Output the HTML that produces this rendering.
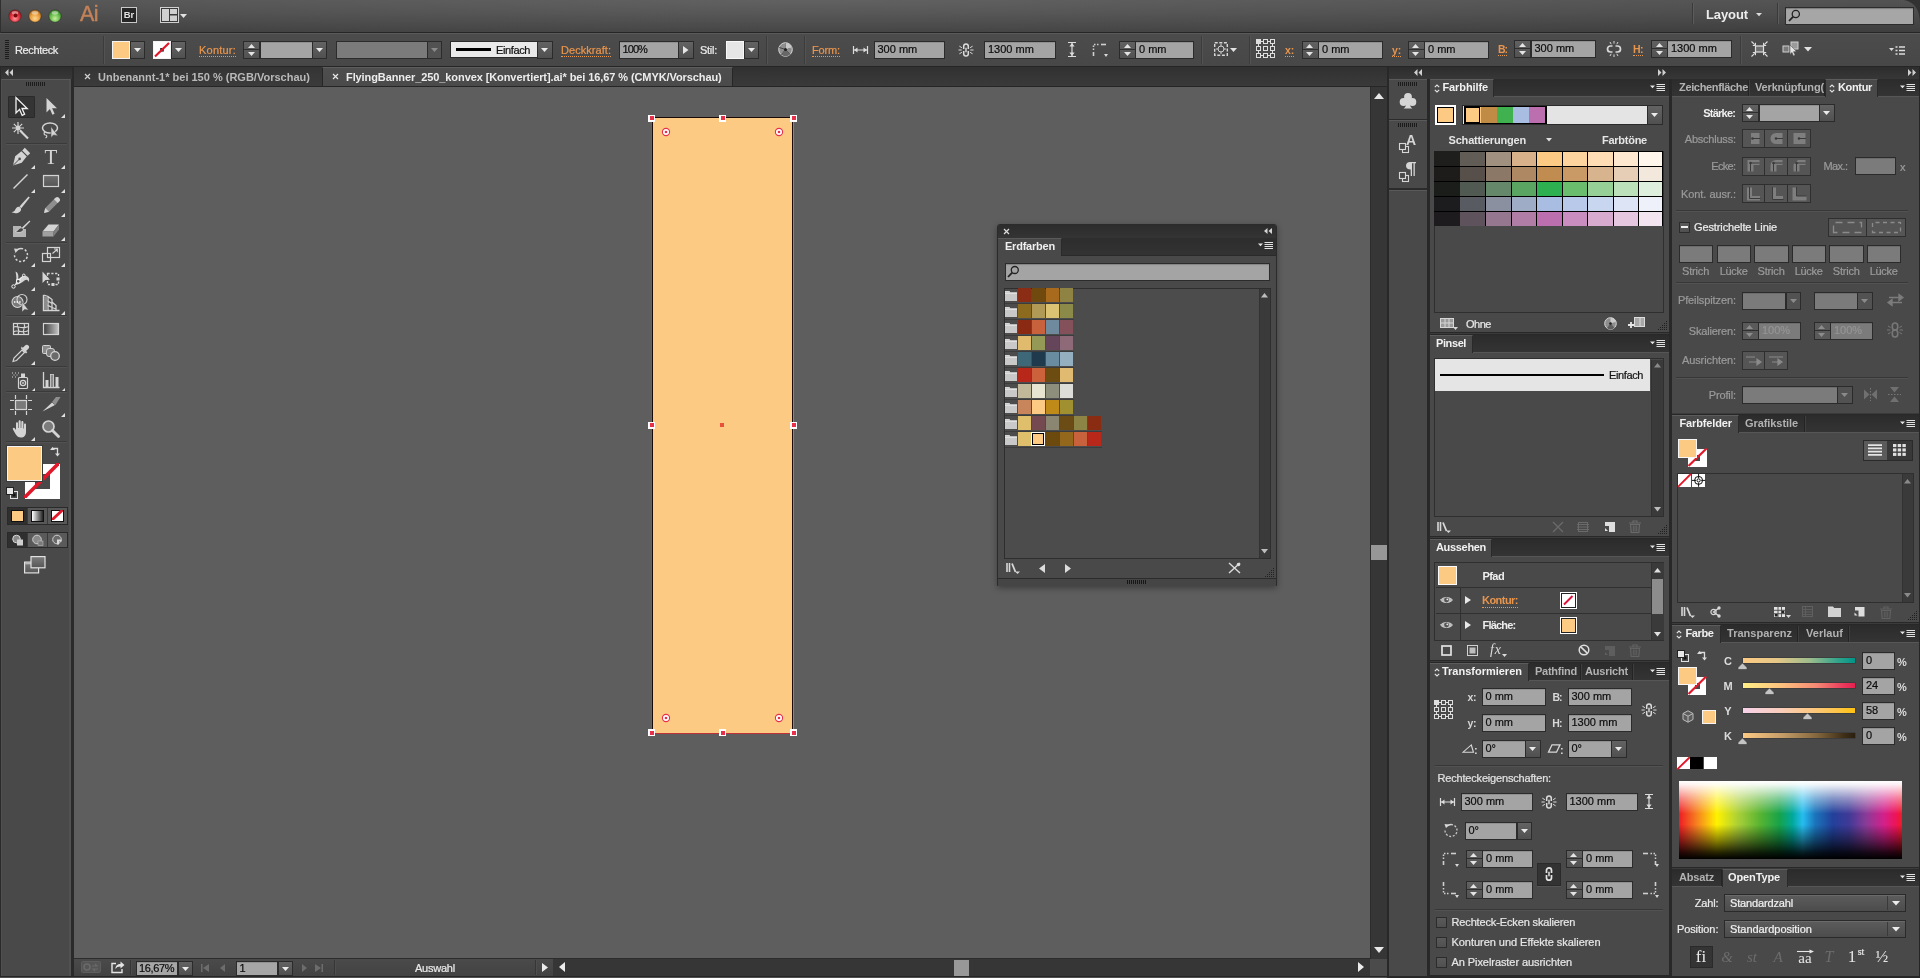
<!DOCTYPE html>
<html><head><meta charset="utf-8"><title>Illustrator</title>
<style>
html,body{margin:0;padding:0;}
body{width:1920px;height:978px;overflow:hidden;background:#5e5e5e;font-family:"Liberation Sans",sans-serif;font-size:11px;position:relative;}
#L{position:absolute;left:0;top:0;width:1920px;height:978px;will-change:transform;}
#L>div,#L>span,#L>svg{position:absolute;box-sizing:border-box;}
#L>svg{overflow:visible;}

</style></head><body><div id="L">
<div style="left:0px;top:0px;width:1920px;height:33px;background:radial-gradient(ellipse 60% 160% at 42% 0%,rgba(255,255,255,.09),rgba(255,255,255,0) 100%),linear-gradient(#525252 0%,#4a4a4a 45%,#3e3e3e 100%);"></div>
<svg style="left:1900px;top:0px;" width="20" height="24" viewBox="0 0 20 24"><path d="M20 0v24C20 10 15 2 4 0z" fill="#2a2a2a" opacity=".8"/></svg>
<div style="left:0px;top:32px;width:1920px;height:1px;background:#262626;"></div>
<div style="left:0px;top:0px;width:1px;height:67px;background:#303030;"></div>
<div style="left:0px;top:33px;width:1920px;height:33px;background:linear-gradient(#4c4c4c,#474747);"></div>
<div style="left:0px;top:33px;width:1920px;height:1px;background:#5a5a5a;"></div>
<div style="left:0px;top:66px;width:1920px;height:1px;background:#262626;"></div>
<div style="left:73px;top:67px;width:1315px;height:20px;background:linear-gradient(#313131,#3a3a3a);"></div>
<div style="left:73px;top:86px;width:1315px;height:1px;background:#2a2a2a;"></div>
<div style="left:74px;top:87px;width:1296px;height:872px;background:#5e5e5e;"></div>
<svg style="left:8px;top:8.6px;" width="14" height="15" viewBox="0 0 14 15"><defs><radialGradient id="g15" cx="50%" cy="70%" r="60%"><stop offset="0" stop-color="#ff9aa0"/><stop offset=".6" stop-color="#e0323c"/><stop offset="1" stop-color="#a81a22"/></radialGradient></defs><circle cx="7" cy="7" r="6.2" fill="url(#g15)" stroke="rgba(40,30,30,.55)" stroke-width=".8"/><ellipse cx="7" cy="3.8" rx="3.3" ry="1.9" fill="rgba(255,255,255,.45)"/></svg>
<svg style="left:12.5px;top:12.6px;" width="5" height="5" viewBox="0 0 5 5"><circle cx="2.5" cy="2.5" r="2" fill="#7a0a10"/></svg>
<svg style="left:27.5px;top:8.6px;" width="14" height="15" viewBox="0 0 14 15"><defs><radialGradient id="g34" cx="50%" cy="70%" r="60%"><stop offset="0" stop-color="#ffd890"/><stop offset=".6" stop-color="#eaa040"/><stop offset="1" stop-color="#b87420"/></radialGradient></defs><circle cx="7" cy="7" r="6.2" fill="url(#g34)" stroke="rgba(40,30,30,.55)" stroke-width=".8"/><ellipse cx="7" cy="3.8" rx="3.3" ry="1.9" fill="rgba(255,255,255,.45)"/></svg>
<svg style="left:47.5px;top:8.6px;" width="14" height="15" viewBox="0 0 14 15"><defs><radialGradient id="g54" cx="50%" cy="70%" r="60%"><stop offset="0" stop-color="#c8f0a0"/><stop offset=".6" stop-color="#6cbf4e"/><stop offset="1" stop-color="#3f8a2c"/></radialGradient></defs><circle cx="7" cy="7" r="6.2" fill="url(#g54)" stroke="rgba(40,30,30,.55)" stroke-width=".8"/><ellipse cx="7" cy="3.8" rx="3.3" ry="1.9" fill="rgba(255,255,255,.45)"/></svg>
<span style="font-size:21.5px;line-height:24px;color:#c38258;white-space:nowrap;letter-spacing:-0.56px;left:80px;top:2px;-webkit-text-stroke:.45px #c38258;">Ai</span>
<div style="left:121px;top:7px;width:16px;height:16px;background:#262626;border:1px solid #c9c9c9;"></div>
<span style="font-size:9.5px;line-height:10px;color:#e0e0e0;white-space:nowrap;font-weight:700;left:123.72px;top:10.2px;">Br</span>
<svg style="left:160px;top:7px;" width="19" height="16" viewBox="0 0 19 16"><rect x=".5" y=".5" width="18" height="15" fill="#3a3a3a" stroke="#d0d0d0"/><rect x="2" y="2" width="7" height="12" fill="#cfcfcf"/><rect x="10" y="2" width="7" height="5" fill="#cfcfcf"/><rect x="10" y="8.5" width="7" height="5.5" fill="#cfcfcf"/></svg>
<svg style="left:180px;top:14px;" width="7" height="4" viewBox="0 0 7 4"><path d="M0 0H7 L3.5 4 Z" fill="#e2e2e2"/></svg>
<div style="left:1692px;top:3px;width:1px;height:21px;background:#3a3a3a;"></div>
<div style="left:1693px;top:3px;width:1px;height:21px;background:#5c5c5c;"></div>
<span style="font-size:13px;line-height:16px;color:#ececec;white-space:nowrap;font-weight:700;letter-spacing:-0.1px;left:1706px;top:6.6px;">Layout</span>
<svg style="left:1756px;top:13px;" width="6" height="3.2" viewBox="0 0 6 3.2"><path d="M0 0H6 L3 3.2 Z" fill="#dcdcdc"/></svg>
<div style="left:1777px;top:3px;width:1px;height:21px;background:#3a3a3a;"></div>
<div style="left:1778px;top:3px;width:1px;height:21px;background:#5c5c5c;"></div>
<div style="left:1785px;top:7px;width:129px;height:18px;background:#a6a6a6;border:1px solid #2c2c2c;box-shadow:inset 0 1px 1px rgba(0,0,0,.25);"></div>
<svg style="left:1788px;top:9px;" width="13" height="13" viewBox="0 0 13 13"><circle cx="7.8" cy="5" r="3.6" fill="none" stroke="#222" stroke-width="1.3"/><path d="M5.2 7.6L1 12" stroke="#222" stroke-width="1.8"/></svg>
<svg style="left:5px;top:40px;" width="4" height="20" viewBox="0 0 4 20"><rect x="0" y="0" width="4" height="1" fill="#1c1c1c"/><rect x="0" y="2" width="4" height="1" fill="#1c1c1c"/><rect x="0" y="4" width="4" height="1" fill="#1c1c1c"/><rect x="0" y="6" width="4" height="1" fill="#1c1c1c"/><rect x="0" y="8" width="4" height="1" fill="#1c1c1c"/><rect x="0" y="10" width="4" height="1" fill="#1c1c1c"/><rect x="0" y="12" width="4" height="1" fill="#1c1c1c"/><rect x="0" y="14" width="4" height="1" fill="#1c1c1c"/><rect x="0" y="16" width="4" height="1" fill="#1c1c1c"/><rect x="0" y="18" width="4" height="1" fill="#1c1c1c"/></svg>
<span style="font-size:11px;line-height:14px;color:#eaeaea;white-space:nowrap;-webkit-text-stroke:.22px #eaeaea;letter-spacing:-0.36px;left:15px;top:43px;">Rechteck</span>
<div style="left:103px;top:36px;width:1px;height:28px;background:#3c3c3c;"></div>
<div style="left:104px;top:36px;width:1px;height:28px;background:#535353;"></div>
<div style="left:112px;top:41px;width:18px;height:17.5px;background:#fcca83;border:1px solid #f4f4f4;outline:0;"></div>
<div style="left:130px;top:40.5px;width:15px;height:18px;background:linear-gradient(#636363,#505050);border:1px solid #2b2b2b;"></div>
<svg style="left:134px;top:48px;" width="7" height="4" viewBox="0 0 7 4"><path d="M0 0H7 L3.5 4 Z" fill="#ececec"/></svg>
<div style="left:153px;top:41px;width:18px;height:17.5px;background:#fff;border:1px solid #f4f4f4;"></div>
<svg style="left:153px;top:41px;" width="18" height="17.5" viewBox="0 0 18 17.5"><rect x="7.2" y="7" width="3.6" height="3.6" fill="#222"/><path d="M2 15.5L16 2" stroke="#e0182a" stroke-width="2.2"/></svg>
<div style="left:171px;top:40.5px;width:15px;height:18px;background:linear-gradient(#636363,#505050);border:1px solid #2b2b2b;"></div>
<svg style="left:175px;top:48px;" width="7" height="4" viewBox="0 0 7 4"><path d="M0 0H7 L3.5 4 Z" fill="#ececec"/></svg>
<span style="font-size:11px;line-height:14px;color:#e8954e;white-space:nowrap;-webkit-text-stroke:.22px #e8954e;letter-spacing:0.22px;left:199px;top:43px;">Kontur:</span>
<div style="left:199px;top:56.4px;width:37px;height:1px;border-top:1px dotted #e8954e;"></div>
<div style="left:242.5px;top:40.5px;width:17.5px;height:18px;background:linear-gradient(#616161,#525252);border:1px solid #2b2b2b;"></div>
<div style="left:243.5px;top:49px;width:15.5px;height:1px;background:#2f2f2f;"></div>
<svg style="left:248px;top:44px;" width="7" height="4" viewBox="0 0 7 4"><path d="M0 4 H7 L3.5 0 Z" fill="#e4e4e4"/></svg>
<svg style="left:248px;top:52px;" width="7" height="4" viewBox="0 0 7 4"><path d="M0 0H7 L3.5 4 Z" fill="#e4e4e4"/></svg>
<div style="left:259.5px;top:40.5px;width:53px;height:18px;background:#a4a4a4;border:1px solid #2b2b2b;box-shadow:inset 0 1px 0 rgba(0,0,0,.12);"></div>
<div style="left:312px;top:40.5px;width:15px;height:18px;background:linear-gradient(#636363,#505050);border:1px solid #2b2b2b;"></div>
<svg style="left:316px;top:48px;" width="7" height="4" viewBox="0 0 7 4"><path d="M0 0H7 L3.5 4 Z" fill="#ececec"/></svg>
<div style="left:336px;top:40.5px;width:92px;height:18px;background:#7b7b7b;border:1px solid #2b2b2b;"></div>
<div style="left:427px;top:40.5px;width:14.5px;height:18px;background:#525252;border:1px solid #2b2b2b;"></div>
<svg style="left:431px;top:48px;" width="7" height="4" viewBox="0 0 7 4"><path d="M0 0H7 L3.5 4 Z" fill="#8a8a8a"/></svg>
<div style="left:450px;top:41px;width:88px;height:17px;background:#e9e9e9;border:1px solid #2b2b2b;"></div>
<div style="left:456px;top:48px;width:35px;height:3px;background:#000;"></div>
<span style="font-size:11px;line-height:14px;color:#111;white-space:nowrap;-webkit-text-stroke:.22px #111;letter-spacing:-0.38px;left:496px;top:43px;">Einfach</span>
<div style="left:537px;top:40.5px;width:15.5px;height:18px;background:linear-gradient(#636363,#505050);border:1px solid #2b2b2b;"></div>
<svg style="left:541px;top:48px;" width="7" height="4" viewBox="0 0 7 4"><path d="M0 0H7 L3.5 4 Z" fill="#ececec"/></svg>
<span style="font-size:11px;line-height:14px;color:#e8954e;white-space:nowrap;-webkit-text-stroke:.22px #e8954e;letter-spacing:0.05px;left:561px;top:43px;">Deckkraft:</span>
<div style="left:561px;top:56.4px;width:50px;height:1px;border-top:1px dotted #e8954e;"></div>
<div style="left:618.5px;top:40.5px;width:60px;height:18px;background:#a4a4a4;border:1px solid #2b2b2b;box-shadow:inset 0 1px 0 rgba(0,0,0,.12);"></div>
<span style="font-size:11px;line-height:14px;color:#0c0c0c;white-space:nowrap;letter-spacing:-0.91px;left:622.5px;top:42.2px;-webkit-text-stroke:.2px #0c0c0c;">100%</span>
<div style="left:678px;top:40.5px;width:15.5px;height:18px;background:linear-gradient(#636363,#505050);border:1px solid #2b2b2b;"></div>
<svg style="left:683px;top:46px;" width="5.5" height="8" viewBox="0 0 5.5 8"><path d="M0 0V8 L5.5 4 Z" fill="#e6e6e6"/></svg>
<span style="font-size:11px;line-height:14px;color:#eaeaea;white-space:nowrap;-webkit-text-stroke:.22px #eaeaea;letter-spacing:-0.27px;left:700px;top:43px;">Stil:</span>
<div style="left:725.5px;top:41px;width:18px;height:17.5px;background:#e6e6e6;border:1px solid #f8f8f8;"></div>
<div style="left:743.5px;top:40.5px;width:15px;height:18px;background:linear-gradient(#636363,#505050);border:1px solid #2b2b2b;"></div>
<svg style="left:748px;top:48px;" width="7" height="4" viewBox="0 0 7 4"><path d="M0 0H7 L3.5 4 Z" fill="#ececec"/></svg>
<div style="left:766px;top:36px;width:1px;height:28px;background:#3c3c3c;"></div>
<div style="left:767px;top:36px;width:1px;height:28px;background:#535353;"></div>
<svg style="left:778px;top:42px;" width="15" height="15" viewBox="0 0 15 15"><circle cx="7.5" cy="7.5" r="6.8" fill="#8e8e8e" stroke="#d8d8d8" stroke-width="1"/><path d="M7.5 7.5L7.5 1M7.5 7.5L13.5 5M7.5 7.5L12 12.5M7.5 7.5L3.5 12.8M7.5 7.5L1.3 5.5" stroke="#444" stroke-width="1"/><path d="M7.5 7.5L7.5 .9A6.6 6.6 0 0 1 13.8 5.4Z" fill="#c8c8c8"/><path d="M7.5 7.5L12 12.4A6.6 6.6 0 0 1 3.4 12.7Z" fill="#686868"/><circle cx="7.5" cy="7.5" r="1.5" fill="#222"/></svg>
<div style="left:804px;top:36px;width:1px;height:28px;background:#3c3c3c;"></div>
<div style="left:805px;top:36px;width:1px;height:28px;background:#535353;"></div>
<span style="font-size:11px;line-height:14px;color:#e8954e;white-space:nowrap;-webkit-text-stroke:.22px #e8954e;letter-spacing:-0.14px;left:812px;top:43px;">Form:</span>
<div style="left:812px;top:56.4px;width:28px;height:1px;border-top:1px dotted #e8954e;"></div>
<svg style="left:853px;top:46px;" width="15" height="8" viewBox="0 0 15 8"><path d="M.5 0v8M14.500 0v8M1 4h13" stroke="#dcdcdc" stroke-width="1.200" fill="none"/><path d="M1 4l3.500-2.600v5.200zM14 4l-3.500-2.600v5.200z" fill="#dcdcdc"/></svg>
<div style="left:873.5px;top:40.5px;width:71.5px;height:18px;background:#a4a4a4;border:1px solid #2b2b2b;box-shadow:inset 0 1px 0 rgba(0,0,0,.12);"></div>
<span style="font-size:11px;line-height:14px;color:#0c0c0c;white-space:nowrap;left:877.5px;top:42.2px;-webkit-text-stroke:.2px #0c0c0c;">300 mm</span>
<svg style="left:958px;top:42px;" width="16" height="16" viewBox="0 0 16 16"><path d="M5.700 7V4.300a2.300 2.300 0 0 1 4.600 0V7M5.700 9v2.700a2.300 2.300 0 0 0 4.600 0V9" fill="none" stroke="#dcdcdc" stroke-width="1.500"/><path d="M8 5.800v4.400" stroke="#dcdcdc" stroke-width="1.400"/><path d="M.5 8h3.200M12.300 8h3.200M1.400 4.200l2.500 1.500M14.600 4.200l-2.500 1.500M1.400 11.800l2.500-1.500M14.600 11.800l-2.500-1.500" stroke="#dcdcdc" stroke-width="1"/></svg>
<div style="left:984px;top:40.5px;width:72px;height:18px;background:#a4a4a4;border:1px solid #2b2b2b;box-shadow:inset 0 1px 0 rgba(0,0,0,.12);"></div>
<span style="font-size:11px;line-height:14px;color:#0c0c0c;white-space:nowrap;left:988px;top:42.2px;-webkit-text-stroke:.2px #0c0c0c;">1300 mm</span>
<svg style="left:1068px;top:42px;" width="8" height="15" viewBox="0 0 8 15"><path d="M0 .5h8M0 14.500h8M4 1v13" stroke="#dcdcdc" stroke-width="1.200" fill="none"/><path d="M4 1l-2.600 3.500h5.200zM4 14l-2.600-3.500h5.200z" fill="#dcdcdc"/></svg>
<svg style="left:1091px;top:42px;" width="17" height="15" viewBox="0 0 17 15"><path d="M2.500 8V2.500H8" stroke="#cfcfcf" stroke-width="1.500" stroke-dasharray="1.500 1.500" fill="none"/><path d="M10 2.500h5" stroke="#cfcfcf" stroke-width="1.600"/><path d="M2.500 10v4" stroke="#cfcfcf" stroke-width="1.600"/></svg>
<svg style="left:1104px;top:54px;" width="4" height="3" viewBox="0 0 4 3"><path d="M0 0h4L2 3z" fill="#d8d8d8"/></svg>
<div style="left:1118.5px;top:40.5px;width:17px;height:18px;background:linear-gradient(#616161,#525252);border:1px solid #2b2b2b;"></div>
<div style="left:1119.5px;top:49px;width:15px;height:1px;background:#2f2f2f;"></div>
<svg style="left:1124px;top:44px;" width="7" height="4" viewBox="0 0 7 4"><path d="M0 4 H7 L3.5 0 Z" fill="#e4e4e4"/></svg>
<svg style="left:1124px;top:52px;" width="7" height="4" viewBox="0 0 7 4"><path d="M0 0H7 L3.5 4 Z" fill="#e4e4e4"/></svg>
<div style="left:1135px;top:40.5px;width:58.5px;height:18px;background:#a4a4a4;border:1px solid #2b2b2b;box-shadow:inset 0 1px 0 rgba(0,0,0,.12);"></div>
<span style="font-size:11px;line-height:14px;color:#0c0c0c;white-space:nowrap;left:1139px;top:42.2px;-webkit-text-stroke:.2px #0c0c0c;">0 mm</span>
<div style="left:1201px;top:36px;width:1px;height:28px;background:#3c3c3c;"></div>
<div style="left:1202px;top:36px;width:1px;height:28px;background:#535353;"></div>
<svg style="left:1214px;top:42px;" width="14" height="14" viewBox="0 0 14 14"><rect x=".7" y=".7" width="12.6" height="12.6" fill="none" stroke="#d6d6d6" stroke-width="1.4" stroke-dasharray="3 1.6"/><circle cx="7" cy="7" r="3" fill="none" stroke="#cfcfcf" stroke-width="1"/><path d="M2 7h2.5M9.5 7H12M7 2v2.5M7 9.5V12" stroke="#cfcfcf" stroke-width="1"/></svg>
<svg style="left:1230px;top:48px;" width="7" height="4" viewBox="0 0 7 4"><path d="M0 0H7 L3.5 4 Z" fill="#e2e2e2"/></svg>
<div style="left:1249px;top:36px;width:1px;height:28px;background:#3c3c3c;"></div>
<div style="left:1250px;top:36px;width:1px;height:28px;background:#535353;"></div>
<svg style="left:1256px;top:39px;" width="19" height="19" viewBox="0 0 19 19"><rect x="0.5" y="0.5" width="4" height="4" fill="#dedede" stroke="#dedede" stroke-width="1"/><rect x="0.5" y="7.5" width="4" height="4" fill="#474747" stroke="#dedede" stroke-width="1"/><rect x="0.5" y="14.5" width="4" height="4" fill="#474747" stroke="#dedede" stroke-width="1"/><rect x="7.5" y="0.5" width="4" height="4" fill="#474747" stroke="#dedede" stroke-width="1"/><rect x="7.5" y="7.5" width="4" height="4" fill="#474747" stroke="#dedede" stroke-width="1"/><rect x="7.5" y="14.5" width="4" height="4" fill="#474747" stroke="#dedede" stroke-width="1"/><rect x="14.5" y="0.5" width="4" height="4" fill="#474747" stroke="#dedede" stroke-width="1"/><rect x="14.5" y="7.5" width="4" height="4" fill="#474747" stroke="#dedede" stroke-width="1"/><rect x="14.5" y="14.5" width="4" height="4" fill="#474747" stroke="#dedede" stroke-width="1"/><path d="M5 2.500h2M12 2.500h2M5 16.500h2M12 16.500h2M2.500 5v2M2.500 12v2M16.500 5v2M16.500 12v2" stroke="#dedede" stroke-width="1"/></svg>
<span style="font-size:10.5px;line-height:14px;color:#e8954e;white-space:nowrap;font-weight:700;letter-spacing:-0.17px;left:1285px;top:43px;">x:</span>
<div style="left:1285px;top:56.4px;width:9px;height:1px;border-top:1px dotted #e8954e;"></div>
<div style="left:1301.5px;top:40.5px;width:17px;height:18px;background:linear-gradient(#616161,#525252);border:1px solid #2b2b2b;"></div>
<div style="left:1302.5px;top:49px;width:15px;height:1px;background:#2f2f2f;"></div>
<svg style="left:1306px;top:44px;" width="7" height="4" viewBox="0 0 7 4"><path d="M0 4 H7 L3.5 0 Z" fill="#e4e4e4"/></svg>
<svg style="left:1306px;top:52px;" width="7" height="4" viewBox="0 0 7 4"><path d="M0 0H7 L3.5 4 Z" fill="#e4e4e4"/></svg>
<div style="left:1318px;top:40.5px;width:65px;height:18px;background:#a4a4a4;border:1px solid #2b2b2b;box-shadow:inset 0 1px 0 rgba(0,0,0,.12);"></div>
<span style="font-size:11px;line-height:14px;color:#0c0c0c;white-space:nowrap;left:1322px;top:42.2px;-webkit-text-stroke:.2px #0c0c0c;">0 mm</span>
<span style="font-size:10.5px;line-height:14px;color:#e8954e;white-space:nowrap;font-weight:700;letter-spacing:-0.17px;left:1392px;top:43px;">y:</span>
<div style="left:1392px;top:56.4px;width:9px;height:1px;border-top:1px dotted #e8954e;"></div>
<div style="left:1407.5px;top:40.5px;width:17px;height:18px;background:linear-gradient(#616161,#525252);border:1px solid #2b2b2b;"></div>
<div style="left:1408.5px;top:49px;width:15px;height:1px;background:#2f2f2f;"></div>
<svg style="left:1412px;top:44px;" width="7" height="4" viewBox="0 0 7 4"><path d="M0 4 H7 L3.5 0 Z" fill="#e4e4e4"/></svg>
<svg style="left:1412px;top:52px;" width="7" height="4" viewBox="0 0 7 4"><path d="M0 0H7 L3.5 4 Z" fill="#e4e4e4"/></svg>
<div style="left:1424px;top:40.5px;width:65px;height:18px;background:#a4a4a4;border:1px solid #2b2b2b;box-shadow:inset 0 1px 0 rgba(0,0,0,.12);"></div>
<span style="font-size:11px;line-height:14px;color:#0c0c0c;white-space:nowrap;left:1428px;top:42.2px;-webkit-text-stroke:.2px #0c0c0c;">0 mm</span>
<span style="font-size:10.5px;line-height:14px;color:#e8954e;white-space:nowrap;font-weight:700;letter-spacing:-1.04px;left:1498px;top:42px;">B:</span>
<div style="left:1498px;top:55.4px;width:9px;height:1px;border-top:1px dotted #e8954e;"></div>
<div style="left:1514px;top:39.5px;width:17px;height:18px;background:linear-gradient(#616161,#525252);border:1px solid #2b2b2b;"></div>
<div style="left:1515px;top:48px;width:15px;height:1px;background:#2f2f2f;"></div>
<svg style="left:1519px;top:43px;" width="7" height="4" viewBox="0 0 7 4"><path d="M0 4 H7 L3.5 0 Z" fill="#e4e4e4"/></svg>
<svg style="left:1519px;top:51px;" width="7" height="4" viewBox="0 0 7 4"><path d="M0 0H7 L3.5 4 Z" fill="#e4e4e4"/></svg>
<div style="left:1530.5px;top:39.5px;width:65px;height:18px;background:#a4a4a4;border:1px solid #2b2b2b;box-shadow:inset 0 1px 0 rgba(0,0,0,.12);"></div>
<span style="font-size:11px;line-height:14px;color:#0c0c0c;white-space:nowrap;left:1534.5px;top:41.2px;-webkit-text-stroke:.2px #0c0c0c;">300 mm</span>
<svg style="left:1606px;top:41px;" width="16" height="16" viewBox="0 0 16 16"><path d="M6.5 5H4.5a3 3 0 0 0 0 6h2M9.5 5h2a3 3 0 0 1 0 6h-2" fill="none" stroke="#d8d8d8" stroke-width="1.7"/><path d="M8 0v2.6M8 13.4V16M4 1l1.2 2.2M12 1l-1.2 2.2M4 15l1.2-2.2M12 15l-1.2-2.2" stroke="#d8d8d8" stroke-width="1"/></svg>
<span style="font-size:10.5px;line-height:14px;color:#e8954e;white-space:nowrap;font-weight:700;letter-spacing:-0.54px;left:1633px;top:42px;">H:</span>
<div style="left:1633px;top:55.4px;width:10px;height:1px;border-top:1px dotted #e8954e;"></div>
<div style="left:1651px;top:39.5px;width:17px;height:18px;background:linear-gradient(#616161,#525252);border:1px solid #2b2b2b;"></div>
<div style="left:1652px;top:48px;width:15px;height:1px;background:#2f2f2f;"></div>
<svg style="left:1656px;top:43px;" width="7" height="4" viewBox="0 0 7 4"><path d="M0 4 H7 L3.5 0 Z" fill="#e4e4e4"/></svg>
<svg style="left:1656px;top:51px;" width="7" height="4" viewBox="0 0 7 4"><path d="M0 0H7 L3.5 4 Z" fill="#e4e4e4"/></svg>
<div style="left:1667px;top:39.5px;width:65px;height:18px;background:#a4a4a4;border:1px solid #2b2b2b;box-shadow:inset 0 1px 0 rgba(0,0,0,.12);"></div>
<span style="font-size:11px;line-height:14px;color:#0c0c0c;white-space:nowrap;left:1671px;top:41.2px;-webkit-text-stroke:.2px #0c0c0c;">1300 mm</span>
<div style="left:1740px;top:36px;width:1px;height:28px;background:#3c3c3c;"></div>
<div style="left:1741px;top:36px;width:1px;height:28px;background:#535353;"></div>
<svg style="left:1751px;top:41px;" width="17" height="16" viewBox="0 0 17 16"><rect x="4.500" y="5" width="8" height="6" fill="#6e6e6e" stroke="#e0e0e0" stroke-width="1.200"/><path d="M.5 .5l3.200 3.200M16.500 .5l-3.200 3.200M.5 15.500l3.200-3.200M16.500 15.500l-3.200-3.200" stroke="#e0e0e0" stroke-width="1.100"/><path d="M4.500 1.800v2.700H1.800M12.500 1.800v2.700h2.700M4.500 14.200v-2.700H1.800M12.500 14.200v-2.700h2.700" fill="none" stroke="#e0e0e0" stroke-width="1"/></svg>
<svg style="left:1782px;top:40px;" width="18" height="18" viewBox="0 0 18 18"><rect x="1" y="6" width="6" height="6" fill="#7a7a7a" stroke="#cfcfcf"/><rect x="9" y="2" width="7" height="7" fill="#9a9a9a" stroke="#cfcfcf"/><path d="M8 5l6.5 6.5-3 .2 1.6 3.4-1.6.8-1.6-3.5L8 14.4z" fill="#e4e4e4" stroke="#444" stroke-width=".5"/></svg>
<svg style="left:1804px;top:47px;" width="8" height="4.5" viewBox="0 0 8 4.5"><path d="M0 0H8 L4 4.5 Z" fill="#e2e2e2"/></svg>
<svg style="left:1889px;top:46px;" width="16" height="10" viewBox="0 0 16 10"><path d="M0 2h5l-2.5 3z" fill="#dcdcdc"/><path d="M6.5 1h2M6.5 4.5h2M6.5 8h2" stroke="#dcdcdc" stroke-width="1.4"/><path d="M10 1h6M10 4.5h6M10 8h6" stroke="#dcdcdc" stroke-width="1.4"/></svg>
<div style="left:74px;top:67px;width:248px;height:20px;background:linear-gradient(#353535,#3b3b3b);"></div>
<div style="left:322px;top:67px;width:411px;height:20px;background:linear-gradient(#4e4e4e,#4a4a4a);border-left:1px solid #262626;border-right:1px solid #262626;border-top:1px solid #5e5e5e;"></div>
<svg style="left:84.5px;top:74px;" width="5" height="5" viewBox="0 0 5 5"><path d="M0 0L5.0 5.0 M5.0 0L0 5.0" stroke="#cfcfcf" stroke-width="1.2"/></svg>
<span style="font-size:11px;line-height:14px;color:#b9b9b9;white-space:nowrap;font-weight:700;letter-spacing:0px;left:98px;top:70px;">Unbenannt-1* bei 150 % (RGB/Vorschau)</span>
<svg style="left:332.5px;top:74px;" width="5" height="5" viewBox="0 0 5 5"><path d="M0 0L5.0 5.0 M5.0 0L0 5.0" stroke="#e8e8e8" stroke-width="1.2"/></svg>
<span style="font-size:11px;line-height:14px;color:#ededed;white-space:nowrap;font-weight:700;letter-spacing:-0.09px;left:346px;top:70px;">FlyingBanner_250_konvex [Konvertiert].ai* bei 16,67 % (CMYK/Vorschau)</span>
<div style="left:74px;top:86px;width:1314px;height:1px;background:#262626;"></div>
<div style="left:0px;top:67px;width:74px;height:911px;background:#2a2a2a;"></div>
<div style="left:1px;top:67px;width:71px;height:12px;background:linear-gradient(#2e2e2e,#383838);"></div>
<svg style="left:5px;top:69px;" width="8" height="7" viewBox="0 0 8 7"><path d="M3.5 0v7L0 3.5zM8 0v7L4.5 3.5z" fill="#d0d0d0"/></svg>
<div style="left:1px;top:79px;width:70px;height:897px;background:#494949;border-top:1px solid #5a5a5a;border-left:1px solid #505050;border-right:2px solid #525252;"></div>
<svg style="left:26px;top:82px;" width="20" height="4" viewBox="0 0 20 4"><rect x="0" y="0" width="1" height="4" fill="#1d1d1d"/><rect x="2" y="0" width="1" height="4" fill="#1d1d1d"/><rect x="4" y="0" width="1" height="4" fill="#1d1d1d"/><rect x="6" y="0" width="1" height="4" fill="#1d1d1d"/><rect x="8" y="0" width="1" height="4" fill="#1d1d1d"/><rect x="10" y="0" width="1" height="4" fill="#1d1d1d"/><rect x="12" y="0" width="1" height="4" fill="#1d1d1d"/><rect x="14" y="0" width="1" height="4" fill="#1d1d1d"/><rect x="16" y="0" width="1" height="4" fill="#1d1d1d"/><rect x="18" y="0" width="1" height="4" fill="#1d1d1d"/></svg>
<div style="left:7.5px;top:96px;width:27px;height:21.5px;background:#343434;border:1px solid #2a2a2a;border-radius:1px;"></div>
<svg style="left:10px;top:96px;" width="22" height="22" viewBox="0 0 22 22"><path d="M6 1.5v15.5l3.6-3.6 2.6 6 2.4-1.1-2.6-5.8h5.2z" fill="#2c2c2c" stroke="#f2f2f2" stroke-width="1.3" stroke-linejoin="miter"/></svg>
<svg style="left:40px;top:96px;" width="22" height="22" viewBox="0 0 22 22"><path d="M6.5 2v14.5l3.4-3.4 2.5 5.6 2.2-1-2.5-5.5h4.9z" fill="#d4d4d4"/></svg>
<svg style="left:60.5px;top:114px;" width="4" height="4" viewBox="0 0 4 4"><path d="M4 0V4H0z" fill="#e0e0e0"/></svg>
<svg style="left:10px;top:120px;" width="22" height="22" viewBox="0 0 22 22"><path d="M10 10.5l8 8" stroke="#d4d4d4" stroke-width="2.2"/><path d="M8 2v12M2 8h12M3.8 3.8l8.4 8.4M12.2 3.8l-8.4 8.4" stroke="#d4d4d4" stroke-width="1.2"/><circle cx="8" cy="8" r="2.4" fill="#d4d4d4"/></svg>
<svg style="left:40px;top:120px;" width="22" height="22" viewBox="0 0 22 22"><ellipse cx="10" cy="8" rx="7.5" ry="5" fill="none" stroke="#d4d4d4" stroke-width="1.5"/><path d="M5 12c-1.5 1 -1 3 .5 3s2 2 0 3" fill="none" stroke="#d4d4d4" stroke-width="1.2"/><path d="M11 6.5v11l2.6-2.6 4.4 1z" fill="#d4d4d4" stroke="#494949" stroke-width=".6"/></svg>
<svg style="left:10px;top:146px;" width="22" height="22" viewBox="0 0 22 22"><path d="M3 19.5l2.2-9.2 6.2-5 5.3 5.3-5 6.2z" fill="#d4d4d4"/><path d="M3 19.5l6-6" stroke="#494949" stroke-width="1"/><circle cx="9.6" cy="12.9" r="1.3" fill="#494949"/><path d="M12.2 4.4l2.6-2.6 5.4 5.4-2.6 2.6z" fill="#d4d4d4"/></svg>
<svg style="left:30.5px;top:164.5px;" width="4" height="4" viewBox="0 0 4 4"><path d="M4 0V4H0z" fill="#e0e0e0"/></svg>
<span style="font-size:21px;line-height:22px;color:#d4d4d4;white-space:nowrap;font-family:'Liberation Serif',serif;left:44.59px;top:146px;">T</span>
<svg style="left:61px;top:165px;" width="4" height="4" viewBox="0 0 4 4"><path d="M4 0V4H0z" fill="#e0e0e0"/></svg>
<svg style="left:10px;top:170px;" width="22" height="22" viewBox="0 0 22 22"><path d="M3.5 18.5L17.5 4.500" stroke="#d4d4d4" stroke-width="1.5"/></svg>
<svg style="left:30.5px;top:189px;" width="4" height="4" viewBox="0 0 4 4"><path d="M4 0V4H0z" fill="#e0e0e0"/></svg>
<svg style="left:40px;top:170px;" width="22" height="22" viewBox="0 0 22 22"><defs><linearGradient id="rg" x1="0" y1="0" x2="0" y2="1"><stop offset="0" stop-color="#6e6e6e"/><stop offset="1" stop-color="#555"/></linearGradient></defs><rect x="3.500" y="5.500" width="15" height="11" fill="url(#rg)" stroke="#d4d4d4" stroke-width="1.2"/></svg>
<svg style="left:60.5px;top:189px;" width="4" height="4" viewBox="0 0 4 4"><path d="M4 0V4H0z" fill="#e0e0e0"/></svg>
<svg style="left:10px;top:194px;" width="22" height="22" viewBox="0 0 22 22"><path d="M18.5 2.500L9.5 12.500l1.8 1.700L19.800 3.600z" fill="#d4d4d4"/><path d="M9 12.800c-2.500 0-3.400 2.200-4.200 3.600-.8 1.300-2.600 1.700-3.300 1.700 2.500 1.700 7 1.700 9.200-1.400.9-1.300.4-3.100-1.700-3.900z" fill="#d4d4d4"/></svg>
<svg style="left:40px;top:194px;" width="22" height="22" viewBox="0 0 22 22"><path d="M4 19l1.300-5L15.200 4.100l3.700 3.700L9 17.700z" fill="#8e8e8e"/><path d="M4 19l1.300-5 3.700 3.700z" fill="#d4d4d4"/><path d="M14 5.300l1.800-1.800c.8-.8 2-.8 2.800 0l.9.900c.8.800.8 2 0 2.800L17.700 9z" fill="#d4d4d4"/></svg>
<svg style="left:60.5px;top:212.5px;" width="4" height="4" viewBox="0 0 4 4"><path d="M4 0V4H0z" fill="#e0e0e0"/></svg>
<svg style="left:10px;top:218px;" width="22" height="22" viewBox="0 0 22 22"><path d="M3 8h8v3h5v8H3z" fill="#b4b4b4"/><path d="M19.500 2.500L12 9.500l1.200 1.300L20.300 3.600z" fill="#d4d4d4"/><path d="M12 9.800c-2.200-.3-3.400 1.200-4.300 2.400-.7.900-2 1.200-2.700 1.200 2 1.600 6 1.600 8-.6.900-1 .6-2.400-1-3z" fill="#494949" stroke="#d4d4d4" stroke-width=".9"/></svg>
<svg style="left:40px;top:218px;" width="22" height="22" viewBox="0 0 22 22"><path d="M2.500 13.500L8.500 6.500h10.500l-5.500 7z" fill="#d4d4d4"/><path d="M2.500 13.500h11v5h-11z" fill="#a0a0a0"/><path d="M13.500 13.500L19 6.500v5l-5.500 7z" fill="#7e7e7e"/></svg>
<svg style="left:60.5px;top:236.5px;" width="4" height="4" viewBox="0 0 4 4"><path d="M4 0V4H0z" fill="#e0e0e0"/></svg>
<svg style="left:10px;top:244px;" width="22" height="22" viewBox="0 0 22 22"><path d="M11 4.500a6.500 6.500 0 1 1-6.300 4.800" fill="none" stroke="#d4d4d4" stroke-width="1.500" stroke-dasharray="2.200 1.800"/><path d="M11 4.500a6.500 6.500 0 0 0-4.500 1.800" fill="none" stroke="#d4d4d4" stroke-width="1.500"/><path d="M4 4.500l5 .5-3.500 4z" fill="#d4d4d4"/></svg>
<svg style="left:30.5px;top:262.5px;" width="4" height="4" viewBox="0 0 4 4"><path d="M4 0V4H0z" fill="#e0e0e0"/></svg>
<svg style="left:40px;top:244px;" width="22" height="22" viewBox="0 0 22 22"><rect x="2.500" y="9.500" width="8" height="8" fill="none" stroke="#d4d4d4" stroke-width="1.200"/><rect x="7.500" y="3.500" width="12" height="10" fill="none" stroke="#d4d4d4" stroke-width="1.200"/><path d="M12.500 9.500l4.500-4M14 5h3.300v3.300" fill="none" stroke="#d4d4d4" stroke-width="1.100"/></svg>
<svg style="left:60.5px;top:262.5px;" width="4" height="4" viewBox="0 0 4 4"><path d="M4 0V4H0z" fill="#e0e0e0"/></svg>
<svg style="left:10px;top:268px;" width="22" height="22" viewBox="0 0 22 22"><path d="M5.500 3.500c2.500 1 3.500 4 2.500 8 2.500-3 6.500-5.500 10-2.500 1.500 1.500 1.500 3.500.5 5-.5-2-2-3-4-1.500-3 2.500-6 4-9.500 4.500 2-4.500 1.500-9 .5-13.500z" fill="#d4d4d4"/><path d="M4 18l9.500-10.500" stroke="#f4f4f4" stroke-width=".9"/><circle cx="3.500" cy="18.500" r="1.700" fill="#494949" stroke="#f4f4f4" stroke-width="1"/><circle cx="8.300" cy="13.300" r="1.900" fill="#494949" stroke="#f4f4f4" stroke-width="1.100"/><circle cx="13.800" cy="7.300" r="1.300" fill="#494949" stroke="#f4f4f4" stroke-width=".9"/></svg>
<svg style="left:30.5px;top:286.5px;" width="4" height="4" viewBox="0 0 4 4"><path d="M4 0V4H0z" fill="#e0e0e0"/></svg>
<svg style="left:40px;top:268px;" width="22" height="22" viewBox="0 0 22 22"><rect x="7.500" y="5.500" width="11" height="11" fill="none" stroke="#d4d4d4" stroke-width="1.300" stroke-dasharray="2.200 1.600"/><path d="M2.500 3.500v11.500l3-3 4.500-.3z" fill="#d4d4d4"/><rect x="16.500" y="9.500" width="3" height="3" fill="#d4d4d4"/><rect x="11.500" y="15" width="3" height="3" fill="#d4d4d4"/></svg>
<svg style="left:10px;top:292px;" width="22" height="22" viewBox="0 0 22 22"><circle cx="7.500" cy="10" r="5.500" fill="#7a7a7a" stroke="#d4d4d4" stroke-width="1.100"/><circle cx="12" cy="7.500" r="5" fill="none" stroke="#d4d4d4" stroke-width="1.100"/><path d="M4 10h7" stroke="#fff" stroke-width="1.400" stroke-dasharray="1.400 1.200"/><path d="M12 9.500v10.500l2.500-2.500 4 .6z" fill="#d4d4d4" stroke="#494949" stroke-width=".5"/></svg>
<svg style="left:30.5px;top:310.5px;" width="4" height="4" viewBox="0 0 4 4"><path d="M4 0V4H0z" fill="#e0e0e0"/></svg>
<svg style="left:40px;top:292px;" width="22" height="22" viewBox="0 0 22 22"><path d="M3.500 3v15.500h16" fill="none" stroke="#d4d4d4" stroke-width="1.400"/><path d="M3.500 3l4.500 1.500v14M8 4.500l4 3v11M12 10l4 3.500v5M3.500 8l4.500 1 4 2.500M3.500 13l4.500.5 4 2 4 1.500" fill="none" stroke="#d4d4d4" stroke-width="1.300"/><path d="M4 4l3.500 1.200v12.800H4z" fill="#8c8c8c"/></svg>
<svg style="left:60.5px;top:310.5px;" width="4" height="4" viewBox="0 0 4 4"><path d="M4 0V4H0z" fill="#e0e0e0"/></svg>
<svg style="left:10px;top:318px;" width="22" height="22" viewBox="0 0 22 22"><rect x="3.500" y="5.500" width="15" height="11" fill="none" stroke="#d4d4d4" stroke-width="1.200"/><path d="M3.500 9c4-2 7 3 15-.5M3.500 14c4-3.500 8 2.500 15-1.500M7.500 5.500c-1.500 4 3.500 6 .5 11M14 5.500c2.500 3.500-3 7.500 .5 11" fill="none" stroke="#d4d4d4" stroke-width="1.100"/></svg>
<svg style="left:40px;top:318px;" width="22" height="22" viewBox="0 0 22 22"><defs><linearGradient id="gg" x1="0" y1="0" x2="1" y2="0"><stop offset="0" stop-color="#3c3c3c"/><stop offset="1" stop-color="#c4c4c4"/></linearGradient></defs><rect x="3.500" y="5.500" width="15" height="11" fill="url(#gg)" stroke="#d4d4d4" stroke-width="1.200"/></svg>
<svg style="left:10px;top:342px;" width="22" height="22" viewBox="0 0 22 22"><path d="M3 19.500l1-3.500 8-8 2.500 2.500-8 8z" fill="#494949" stroke="#d4d4d4" stroke-width="1.200"/><path d="M11 6.500l5 5 1.300-1.300-1.200-1.200 2.300-2.300c1-1 1-2.300 0-3.300s-2.300-1-3.300 0l-2.300 2.300-1.200-1.200z" fill="#d4d4d4"/></svg>
<svg style="left:30.5px;top:360.5px;" width="4" height="4" viewBox="0 0 4 4"><path d="M4 0V4H0z" fill="#e0e0e0"/></svg>
<svg style="left:40px;top:342px;" width="22" height="22" viewBox="0 0 22 22"><rect x="2.500" y="3.500" width="8" height="8" rx="1" fill="#8a8a8a" stroke="#d4d4d4" stroke-width="1"/><rect x="6.500" y="6.500" width="8" height="8" rx="2.500" fill="#7a7a7a" stroke="#d4d4d4" stroke-width="1"/><circle cx="15" cy="14" r="4.300" fill="#6a6a6a" stroke="#d4d4d4" stroke-width="1.300"/></svg>
<svg style="left:10px;top:369px;" width="22" height="22" viewBox="0 0 22 22"><rect x="8.500" y="8.500" width="9" height="11" rx="1" fill="#494949" stroke="#d4d4d4" stroke-width="1.200"/><rect x="11" y="4.500" width="4" height="4" fill="#d4d4d4"/><circle cx="13" cy="14" r="2.600" fill="none" stroke="#d4d4d4" stroke-width="1.300"/><circle cx="13" cy="14" r=".9" fill="#d4d4d4"/><path d="M2 4h1M5 4h1M8 4h1M3.500 6h1M6.500 6h1M2 8h1M5 8h1" stroke="#d4d4d4" stroke-width="1.200"/></svg>
<svg style="left:30.5px;top:387.5px;" width="4" height="4" viewBox="0 0 4 4"><path d="M4 0V4H0z" fill="#e0e0e0"/></svg>
<svg style="left:40px;top:369px;" width="22" height="22" viewBox="0 0 22 22"><path d="M3.500 3v15.500h16" fill="none" stroke="#d4d4d4" stroke-width="1.300"/><rect x="5.500" y="11" width="3" height="7.500" fill="#d4d4d4"/><rect x="10.500" y="5.500" width="3" height="13" fill="#8a8a8a" stroke="#d4d4d4" stroke-width=".8"/><rect x="15.500" y="8" width="3" height="10.500" fill="#d4d4d4"/></svg>
<svg style="left:60.5px;top:387.5px;" width="4" height="4" viewBox="0 0 4 4"><path d="M4 0V4H0z" fill="#e0e0e0"/></svg>
<svg style="left:10px;top:394px;" width="22" height="22" viewBox="0 0 22 22"><rect x="5.500" y="6.500" width="11" height="9" fill="#7a7a7a" stroke="#d4d4d4" stroke-width="1.200"/><path d="M5.500 1v4M16.500 1v4M5.500 17v4M16.500 17v4M0 6.500h4M0 15.500h4M18 6.500h4M18 15.500h4" stroke="#d4d4d4" stroke-width="1.200"/></svg>
<svg style="left:40px;top:394px;" width="22" height="22" viewBox="0 0 22 22"><path d="M2.500 17.500L12 8.500l3 2.500z" fill="#d4d4d4"/><path d="M12 8l4-5h4.500l-5 8z" fill="#8e8e8e"/></svg>
<svg style="left:60.5px;top:412.5px;" width="4" height="4" viewBox="0 0 4 4"><path d="M4 0V4H0z" fill="#e0e0e0"/></svg>
<svg style="left:10px;top:418px;" width="22" height="22" viewBox="0 0 22 22"><path d="M6 12V5.500c0-1.600 2-1.600 2 0V10h.6V3.500c0-1.600 2.100-1.600 2.100 0V10h.6V4.300c0-1.600 2.100-1.600 2.100 0V10.500h.6V6.500c0-1.500 2-1.500 2 0V14c0 3.500-2 5.500-5 5.500-2.500 0-4-1-5.500-3.500L3 11.500c-.8-1.400 1-2.400 2-1z" fill="#d4d4d4"/></svg>
<svg style="left:30.5px;top:436.5px;" width="4" height="4" viewBox="0 0 4 4"><path d="M4 0V4H0z" fill="#e0e0e0"/></svg>
<svg style="left:40px;top:418px;" width="22" height="22" viewBox="0 0 22 22"><circle cx="8.500" cy="8.500" r="5.500" fill="#7c7c7c" stroke="#d4d4d4" stroke-width="1.700"/><path d="M12.500 12.500l6 6" stroke="#d4d4d4" stroke-width="2.800" stroke-linecap="round"/></svg>
<div style="left:6px;top:143px;width:61px;height:1px;background:#3a3a3a;"></div>
<div style="left:6px;top:144px;width:61px;height:1px;background:#525252;"></div>
<div style="left:6px;top:241.5px;width:61px;height:1px;background:#3a3a3a;"></div>
<div style="left:6px;top:242.5px;width:61px;height:1px;background:#525252;"></div>
<div style="left:6px;top:315px;width:61px;height:1px;background:#3a3a3a;"></div>
<div style="left:6px;top:316px;width:61px;height:1px;background:#525252;"></div>
<div style="left:6px;top:366px;width:61px;height:1px;background:#3a3a3a;"></div>
<div style="left:6px;top:367px;width:61px;height:1px;background:#525252;"></div>
<div style="left:6px;top:391px;width:61px;height:1px;background:#3a3a3a;"></div>
<div style="left:6px;top:392px;width:61px;height:1px;background:#525252;"></div>
<div style="left:6px;top:441px;width:61px;height:1px;background:#3a3a3a;"></div>
<div style="left:6px;top:442px;width:61px;height:1px;background:#525252;"></div>
<div style="left:24.5px;top:463.5px;width:35px;height:35px;background:#fff;"></div>
<div style="left:34.5px;top:473.5px;width:15px;height:15px;background:#494949;"></div>
<svg style="left:24px;top:463px;overflow:hidden;" width="35" height="35" viewBox="0 0 35 35"><path d="M0 35L35 0" stroke="#e0182a" stroke-width="3.600"/></svg>
<div style="left:6.5px;top:446px;width:35px;height:35px;background:#fcca83;border:1px solid #f4f4f4;box-shadow:0 0 0 1px #3a3a3a;"></div>
<svg style="left:50px;top:446px;transform:rotate(0deg);" width="11" height="11" viewBox="0 0 11 11"><path d="M2.500 4V2.500h5V8" fill="none" stroke="#dcdcdc" stroke-width="1.300"/><path d="M0 4h5l-2.500-3zM5 7.500h5L7.500 10.500z" fill="#dcdcdc"/></svg>
<svg style="left:6px;top:487px;" width="12" height="12" viewBox="0 0 12 12"><rect x="4.500" y="4.500" width="7" height="7" fill="#494949" stroke="#e0e0e0" stroke-width="1"/><rect x="6.500" y="6.500" width="3" height="3" fill="#111"/><rect x=".5" y=".5" width="7" height="7" fill="#e6e6e6" stroke="#222" stroke-width="1"/></svg>
<div style="left:7px;top:506.5px;width:60.5px;height:18px;background:#3a3a3a;border:1px solid #2a2a2a;"></div>
<div style="left:8px;top:507.5px;width:19px;height:16px;background:#2f2f2f;"></div>
<div style="left:28px;top:507.5px;width:19px;height:16px;background:#585858;"></div>
<div style="left:48px;top:507.5px;width:18.5px;height:16px;background:#585858;"></div>
<div style="left:11px;top:509.5px;width:12.5px;height:12px;background:#fcca83;border:1px solid #111;"></div>
<div style="left:31px;top:509.5px;width:12.5px;height:12px;background:linear-gradient(90deg,#fff,#222);border:1px solid #111;"></div>
<div style="left:51px;top:509.5px;width:12.5px;height:12px;background:#fff;border:1px solid #111;"></div>
<svg style="left:52px;top:510px;overflow:hidden;" width="10.5" height="10" viewBox="0 0 10.5 10"><path d="M0 10L10.500 0" stroke="#e0182a" stroke-width="2.800"/></svg>
<div style="left:7px;top:532px;width:60.5px;height:15.5px;background:#3a3a3a;border:1px solid #2a2a2a;"></div>
<div style="left:8px;top:533px;width:19px;height:13.5px;background:#2f2f2f;"></div>
<div style="left:28px;top:533px;width:19px;height:13.5px;background:#5a5a5a;"></div>
<div style="left:48px;top:533px;width:18.5px;height:13.5px;background:#5a5a5a;"></div>
<svg style="left:11px;top:534px;" width="13" height="12" viewBox="0 0 13 12"><circle cx="5.500" cy="5" r="3.800" fill="#8a8a8a" stroke="#d8d8d8"/><rect x="6" y="5.500" width="6" height="6" fill="#cfcfcf"/></svg>
<svg style="left:31px;top:534px;" width="13" height="12" viewBox="0 0 13 12"><circle cx="6" cy="5.500" r="4.300" fill="#8a8a8a" stroke="#cfcfcf"/><rect x="7" y="7" width="5" height="4.500" fill="#7a7a7a" stroke="#bbb" stroke-width=".6"/></svg>
<svg style="left:51px;top:534px;" width="13" height="12" viewBox="0 0 13 12"><circle cx="6" cy="5.500" r="4.300" fill="#6a6a6a" stroke="#cfcfcf"/><path d="M6 5.500h4.500v2H8v3H6z" fill="#d8d8d8"/></svg>
<svg style="left:24px;top:557px;" width="22" height="17" viewBox="0 0 22 17"><defs><linearGradient id="sm" x1="0" y1="0" x2="0" y2="1"><stop offset="0" stop-color="#7c7c7c"/><stop offset="1" stop-color="#565656"/></linearGradient></defs><rect x=".6" y="5.100" width="14" height="10.800" fill="url(#sm)" stroke="#e2e2e2" stroke-width="1.200"/><rect x="1.200" y="5.700" width="12.800" height="1.600" fill="#bdbdbd"/><rect x="7" y="-.4" width="14" height="11.200" fill="url(#sm)" stroke="#e2e2e2" stroke-width="1.200"/></svg>
<div style="left:652px;top:117px;width:141px;height:616px;background:#fcca83;"></div>
<div style="left:651px;top:117px;width:1px;height:617px;background:#d2343f;"></div>
<div style="left:652px;top:117px;width:141px;height:1px;background:#1a0a08;"></div>
<div style="left:652px;top:117px;width:1px;height:616px;background:#1a0a08;"></div>
<div style="left:792px;top:117px;width:1px;height:616px;background:#1a0a08;"></div>
<div style="left:793px;top:117px;width:1px;height:617px;background:#e0606a;"></div>
<div style="left:651px;top:733px;width:143px;height:1px;background:#c03038;"></div>
<div style="left:648px;top:114.5px;width:7px;height:7px;background:#fff;"></div>
<div style="left:649.5px;top:116px;width:4px;height:4px;background:#e8304a;"></div>
<div style="left:648px;top:421.5px;width:7px;height:7px;background:#fff;"></div>
<div style="left:649.5px;top:423px;width:4px;height:4px;background:#e8304a;"></div>
<div style="left:648px;top:729px;width:7px;height:7px;background:#fff;"></div>
<div style="left:649.5px;top:730.5px;width:4px;height:4px;background:#e8304a;"></div>
<div style="left:719px;top:114.5px;width:7px;height:7px;background:#fff;"></div>
<div style="left:720.5px;top:116px;width:4px;height:4px;background:#e8304a;"></div>
<div style="left:719px;top:729px;width:7px;height:7px;background:#fff;"></div>
<div style="left:720.5px;top:730.5px;width:4px;height:4px;background:#e8304a;"></div>
<div style="left:790px;top:114.5px;width:7px;height:7px;background:#fff;"></div>
<div style="left:791.5px;top:116px;width:4px;height:4px;background:#e8304a;"></div>
<div style="left:790px;top:421.5px;width:7px;height:7px;background:#fff;"></div>
<div style="left:791.5px;top:423px;width:4px;height:4px;background:#e8304a;"></div>
<div style="left:790px;top:729px;width:7px;height:7px;background:#fff;"></div>
<div style="left:791.5px;top:730.5px;width:4px;height:4px;background:#e8304a;"></div>
<div style="left:719.5px;top:422.5px;width:4px;height:4px;background:#e8503a;"></div>
<svg style="left:661px;top:127px;" width="10" height="10" viewBox="0 0 10 10"><circle cx="5" cy="5" r="3.600" fill="#fff" stroke="#e8304a" stroke-width="1.100"/><circle cx="5" cy="5" r="1.300" fill="#e8304a"/></svg>
<svg style="left:661px;top:713px;" width="10" height="10" viewBox="0 0 10 10"><circle cx="5" cy="5" r="3.600" fill="#fff" stroke="#e8304a" stroke-width="1.100"/><circle cx="5" cy="5" r="1.300" fill="#e8304a"/></svg>
<svg style="left:774px;top:127px;" width="10" height="10" viewBox="0 0 10 10"><circle cx="5" cy="5" r="3.600" fill="#fff" stroke="#e8304a" stroke-width="1.100"/><circle cx="5" cy="5" r="1.300" fill="#e8304a"/></svg>
<svg style="left:774px;top:713px;" width="10" height="10" viewBox="0 0 10 10"><circle cx="5" cy="5" r="3.600" fill="#fff" stroke="#e8304a" stroke-width="1.100"/><circle cx="5" cy="5" r="1.300" fill="#e8304a"/></svg>
<div style="left:1370px;top:87px;width:17px;height:872px;background:#363636;border-left:1px solid #2c2c2c;"></div>
<svg style="left:1374px;top:93px;" width="10" height="6" viewBox="0 0 10 6"><path d="M0 6 H10 L5 0 Z" fill="#e8e8e8"/></svg>
<svg style="left:1374px;top:947px;" width="10" height="6" viewBox="0 0 10 6"><path d="M0 0H10 L5 6 Z" fill="#e8e8e8"/></svg>
<div style="left:1371px;top:545px;width:15.5px;height:15px;background:#979797;"></div>
<div style="left:1370px;top:959px;width:17px;height:17px;background:#4b4b4b;"></div>
<div style="left:74px;top:958px;width:1296px;height:1px;background:#2c2c2c;"></div>
<div style="left:74px;top:959px;width:479px;height:17px;background:linear-gradient(#4a4a4a,#424242);"></div>
<div style="left:553px;top:959px;width:817px;height:17px;background:#363636;"></div>
<div style="left:954px;top:960px;width:15px;height:15.5px;background:#989898;"></div>
<svg style="left:559px;top:962px;" width="6" height="10" viewBox="0 0 6 10"><path d="M6 0V10 L0 5 Z" fill="#ececec"/></svg>
<svg style="left:1358px;top:962px;" width="6" height="10" viewBox="0 0 6 10"><path d="M0 0V10 L6 5 Z" fill="#ececec"/></svg>
<svg style="left:81px;top:961px;" width="20" height="12" viewBox="0 0 20 12"><rect x=".5" y=".5" width="19" height="11" rx="1" fill="#555" stroke="#5e5e5e"/><circle cx="6" cy="6" r="3" fill="none" stroke="#6a6a6a" stroke-width="1.500"/><path d="M11 5h5l-2-2M17 8h-5l2 2" stroke="#6a6a6a" stroke-width="1.200" fill="none"/></svg>
<svg style="left:111px;top:960px;" width="14" height="13" viewBox="0 0 14 13"><path d="M5 3.500H1v9h10V9" fill="none" stroke="#e4e4e4" stroke-width="1.400"/><path d="M4.500 9c0-3.500 2-5 5-5V1.500L13.500 5l-4 3.500V6.500c-2.500 0-4 .8-5 2.500z" fill="#e4e4e4"/></svg>
<div style="left:130px;top:960px;width:1px;height:15px;background:#363636;"></div>
<div style="left:131px;top:960px;width:1px;height:15px;background:#4e4e4e;"></div>
<div style="left:136px;top:960.5px;width:42px;height:15.5px;background:#a6a6a6;border:1px solid #2b2b2b;box-shadow:inset 0 1px 0 rgba(0,0,0,.12);"></div>
<span style="font-size:11px;line-height:14px;color:#0c0c0c;white-space:nowrap;letter-spacing:-0.38px;left:139px;top:961px;-webkit-text-stroke:.2px #0c0c0c;">16,67%</span>
<div style="left:177.5px;top:960.5px;width:15px;height:15.5px;background:linear-gradient(#636363,#505050);border:1px solid #2b2b2b;"></div>
<svg style="left:182px;top:967px;" width="7" height="4" viewBox="0 0 7 4"><path d="M0 0H7 L3.5 4 Z" fill="#ececec"/></svg>
<svg style="left:201px;top:964px;" width="8" height="8" viewBox="0 0 8 8"><path d="M0 0h1.500v8H0zM8 0v8L2 4z" fill="#6c6c6c"/></svg>
<svg style="left:220px;top:964px;" width="5" height="8" viewBox="0 0 5 8"><path d="M5 0V8 L0 4 Z" fill="#6c6c6c"/></svg>
<div style="left:236px;top:960.5px;width:42px;height:15.5px;background:#a6a6a6;border:1px solid #2b2b2b;box-shadow:inset 0 1px 0 rgba(0,0,0,.12);"></div>
<span style="font-size:11px;line-height:14px;color:#0c0c0c;white-space:nowrap;left:239.5px;top:960.95px;-webkit-text-stroke:.2px #0c0c0c;">1</span>
<div style="left:277.5px;top:960.5px;width:15px;height:15.5px;background:linear-gradient(#636363,#505050);border:1px solid #2b2b2b;"></div>
<svg style="left:282px;top:967px;" width="7" height="4" viewBox="0 0 7 4"><path d="M0 0H7 L3.5 4 Z" fill="#ececec"/></svg>
<svg style="left:302px;top:964px;" width="5" height="8" viewBox="0 0 5 8"><path d="M0 0V8 L5 4 Z" fill="#6c6c6c"/></svg>
<svg style="left:315px;top:964px;" width="8" height="8" viewBox="0 0 8 8"><path d="M6.500 0H8v8H6.500zM0 0v8l6-4z" fill="#6c6c6c"/></svg>
<div style="left:334px;top:960px;width:1px;height:15px;background:#363636;"></div>
<div style="left:335px;top:960px;width:1px;height:15px;background:#4e4e4e;"></div>
<span style="font-size:11px;line-height:14px;color:#e8e8e8;white-space:nowrap;-webkit-text-stroke:.22px #e8e8e8;letter-spacing:-0.23px;left:415px;top:961.3px;">Auswahl</span>
<div style="left:535px;top:960px;width:1px;height:15px;background:#363636;"></div>
<div style="left:536px;top:960px;width:1px;height:15px;background:#4e4e4e;"></div>
<svg style="left:542px;top:963px;" width="6" height="9" viewBox="0 0 6 9"><path d="M0 0V9 L6 4.5 Z" fill="#ececec"/></svg>
<div style="left:0px;top:975.5px;width:1920px;height:1.5px;background:#262626;"></div>
<div style="left:0px;top:977px;width:1920px;height:1px;background:#505050;"></div>
<div style="left:1387px;top:67px;width:533px;height:911px;background:#282828;"></div>
<div style="left:1389px;top:67px;width:531px;height:12px;background:linear-gradient(#2d2d2d,#373737);"></div>
<svg style="left:1414px;top:69px;" width="8" height="7" viewBox="0 0 8 7"><path d="M3.500 0v7L0 3.500zM8 0v7L4.500 3.500z" fill="#cfcfcf"/></svg>
<svg style="left:1658px;top:69px;" width="8" height="7" viewBox="0 0 8 7"><path d="M0 0v7l3.500-3.500zM4.500 0v7L8 3.500z" fill="#cfcfcf"/></svg>
<svg style="left:1908px;top:69px;" width="8" height="7" viewBox="0 0 8 7"><path d="M0 0v7l3.500-3.500zM4.500 0v7L8 3.500z" fill="#cfcfcf"/></svg>
<div style="left:1389px;top:79px;width:37.5px;height:897px;background:#494949;border-top:1px solid #5a5a5a;"></div>
<svg style="left:1398px;top:82px;" width="20" height="4" viewBox="0 0 20 4"><rect x="0" y="0" width="1" height="4" fill="#1c1c1c"/><rect x="2" y="0" width="1" height="4" fill="#1c1c1c"/><rect x="4" y="0" width="1" height="4" fill="#1c1c1c"/><rect x="6" y="0" width="1" height="4" fill="#1c1c1c"/><rect x="8" y="0" width="1" height="4" fill="#1c1c1c"/><rect x="10" y="0" width="1" height="4" fill="#1c1c1c"/><rect x="12" y="0" width="1" height="4" fill="#1c1c1c"/><rect x="14" y="0" width="1" height="4" fill="#1c1c1c"/><rect x="16" y="0" width="1" height="4" fill="#1c1c1c"/><rect x="18" y="0" width="1" height="4" fill="#1c1c1c"/></svg>
<div style="left:1389px;top:118.5px;width:37.5px;height:1.5px;background:#2b2b2b;"></div>
<div style="left:1389px;top:120px;width:37.5px;height:1px;background:#5a5a5a;"></div>
<svg style="left:1398px;top:123px;" width="20" height="4" viewBox="0 0 20 4"><rect x="0" y="0" width="1" height="4" fill="#1c1c1c"/><rect x="2" y="0" width="1" height="4" fill="#1c1c1c"/><rect x="4" y="0" width="1" height="4" fill="#1c1c1c"/><rect x="6" y="0" width="1" height="4" fill="#1c1c1c"/><rect x="8" y="0" width="1" height="4" fill="#1c1c1c"/><rect x="10" y="0" width="1" height="4" fill="#1c1c1c"/><rect x="12" y="0" width="1" height="4" fill="#1c1c1c"/><rect x="14" y="0" width="1" height="4" fill="#1c1c1c"/><rect x="16" y="0" width="1" height="4" fill="#1c1c1c"/><rect x="18" y="0" width="1" height="4" fill="#1c1c1c"/></svg>
<div style="left:1389px;top:188px;width:37.5px;height:1.5px;background:#2b2b2b;"></div>
<div style="left:1389px;top:189.5px;width:37.5px;height:1px;background:#5a5a5a;"></div>
<svg style="left:1399px;top:92px;" width="18" height="18" viewBox="0 0 18 18"><circle cx="9" cy="4.800" r="3.900" fill="#d6d6d6"/><circle cx="4.600" cy="10" r="3.900" fill="#d6d6d6"/><circle cx="13.400" cy="10" r="3.900" fill="#d6d6d6"/><path d="M7.500 8h3c0 5 1 7.500 3 8.500h-9C6.500 15.500 7.500 13 7.500 8z" fill="#d6d6d6"/></svg>
<span style="font-size:14px;line-height:16px;color:#d6d6d6;white-space:nowrap;font-weight:700;left:1406px;top:132px;">A</span>
<svg style="left:1399px;top:143px;" width="10" height="10" viewBox="0 0 10 10"><rect x="3.500" y="3.500" width="6" height="6" fill="#494949" stroke="#d6d6d6" stroke-width="1.100"/><rect x=".5" y=".5" width="6" height="6" fill="#494949" stroke="#d6d6d6" stroke-width="1.100"/></svg>
<svg style="left:1405px;top:162px;" width="12" height="14" viewBox="0 0 12 14"><path d="M5 0h6v1.300H9.800V14H8.500V1.300H7V14H5.700V7.500C2.500 7.500 1 5.800 1 3.700S2.500 0 5 0z" fill="#d6d6d6"/></svg>
<svg style="left:1399px;top:172px;" width="10" height="10" viewBox="0 0 10 10"><rect x="3.500" y="3.500" width="6" height="6" fill="#494949" stroke="#d6d6d6" stroke-width="1.100"/><rect x=".5" y=".5" width="6" height="6" fill="#494949" stroke="#d6d6d6" stroke-width="1.100"/></svg>
<div style="left:1429.5px;top:333px;width:239px;height:1px;background:#3b3b3b;"></div>
<div style="left:1429.5px;top:537px;width:239px;height:1px;background:#3b3b3b;"></div>
<div style="left:1429.5px;top:661px;width:239px;height:1px;background:#3b3b3b;"></div>
<div style="left:1672px;top:413px;width:247px;height:1px;background:#3b3b3b;"></div>
<div style="left:1672px;top:623px;width:247px;height:1px;background:#3b3b3b;"></div>
<div style="left:1672px;top:867.5px;width:247px;height:1px;background:#3b3b3b;"></div>
<div style="left:1429.5px;top:79px;width:239px;height:16.5px;background:linear-gradient(#2b2b2b,#343434);"></div>
<div style="left:1429.5px;top:95.5px;width:239px;height:236.5px;background:#494949;border-top:1px solid #565656;"></div>
<div style="left:1429.5px;top:79px;width:64.5px;height:17.5px;background:#494949;border-top:1px solid #5c5c5c;border-right:1px solid #2a2a2a;"></div>
<svg style="left:1434px;top:84px;" width="6" height="9" viewBox="0 0 6 9"><path d="M.8 3.200L3 1l2.200 2.200M.8 5.800L3 8l2.200-2.200" fill="none" stroke="#e6e6e6" stroke-width="1.100"/></svg>
<span style="font-size:11px;line-height:14px;color:#f2f2f2;white-space:nowrap;font-weight:700;letter-spacing:-0.11px;left:1442.5px;top:80.2px;">Farbhilfe</span>
<svg style="left:1650px;top:84px;" width="15" height="8" viewBox="0 0 15 8"><path d="M0 1.500h5l-2.500 2.800z" fill="#e2e2e2"/><path d="M6.500 .5h8.500M6.500 2.500h8.500M6.500 4.500h8.500M6.500 6.500h8.500" stroke="#e2e2e2" stroke-width="1"/></svg>
<div style="left:1434.5px;top:104.5px;width:21px;height:20px;background:#fcca83;border:1px solid #000;box-shadow:inset 0 0 0 0 #000;outline:0;"></div>
<div style="left:1434.5px;top:104.5px;width:21px;height:20px;border:2px solid #fff;"></div>
<div style="left:1436.5px;top:106.5px;width:17px;height:16px;background:#fcca83;border:1px solid #000;"></div>
<div style="left:1462px;top:104.5px;width:185.5px;height:20px;background:#e4e4e4;border:1px solid #2b2b2b;"></div>
<div style="left:1464px;top:105.5px;width:82.5px;height:18px;background:#000;"></div>
<div style="left:1464.5px;top:106.5px;width:16.2px;height:16px;background:#fcca83;"></div>
<div style="left:1480.7px;top:106.5px;width:16.2px;height:16px;background:#c08c45;"></div>
<div style="left:1496.9px;top:106.5px;width:16.2px;height:16px;background:#3fb14f;"></div>
<div style="left:1513.1px;top:106.5px;width:16.2px;height:16px;background:#a9bde3;"></div>
<div style="left:1529.3px;top:106.5px;width:16.2px;height:16px;background:#bb6fae;"></div>
<div style="left:1464.5px;top:106.5px;width:15.5px;height:16px;background:#fcca83;border:1px solid #000;"></div>
<div style="left:1647px;top:104.5px;width:15.5px;height:20px;background:linear-gradient(#636363,#505050);border:1px solid #2b2b2b;"></div>
<svg style="left:1651px;top:113px;" width="7" height="4" viewBox="0 0 7 4"><path d="M0 0H7 L3.5 4 Z" fill="#ececec"/></svg>
<span style="font-size:11px;line-height:14px;color:#e6e6e6;white-space:nowrap;font-weight:700;letter-spacing:-0.18px;left:1448.5px;top:132.5px;">Schattierungen</span>
<svg style="left:1546px;top:138px;" width="6" height="3.5" viewBox="0 0 6 3.5"><path d="M0 0H6 L3 3.5 Z" fill="#e0e0e0"/></svg>
<span style="font-size:11px;line-height:14px;color:#e6e6e6;white-space:nowrap;font-weight:700;letter-spacing:-0.26px;left:1602px;top:132.5px;">Farbtöne</span>
<div style="left:1434px;top:151px;width:230px;height:162px;background:#494949;border:1px solid #2f2f2f;"></div>
<div style="left:1434.1px;top:151.4px;width:228.9px;height:74.9px;background:#000;"></div>
<div style="left:1434.1px;top:151.4px;width:26.3px;height:14.3px;background:#1e1e1d;"></div>
<div style="left:1460.4px;top:152px;width:24.6px;height:13.7px;background:#615d56;"></div>
<div style="left:1486.2px;top:152px;width:24.4px;height:13.7px;background:#a09080;"></div>
<div style="left:1511.8px;top:152px;width:24.2px;height:13.7px;background:#d8b18a;"></div>
<div style="left:1537.2px;top:152px;width:24.5px;height:13.7px;background:#fcca83;"></div>
<div style="left:1562.9px;top:152px;width:24px;height:13.7px;background:#fdd39e;"></div>
<div style="left:1588.1px;top:152px;width:24.8px;height:13.7px;background:#feddb5;"></div>
<div style="left:1614.1px;top:152px;width:24px;height:13.7px;background:#fee9d0;"></div>
<div style="left:1639.3px;top:152px;width:23.1px;height:13.7px;background:#fff6ec;"></div>
<div style="left:1434.1px;top:166.9px;width:26.3px;height:14.1px;background:#1d1c1b;"></div>
<div style="left:1460.4px;top:166.9px;width:24.6px;height:14.1px;background:#57504a;"></div>
<div style="left:1486.2px;top:166.9px;width:24.4px;height:14.1px;background:#8c7866;"></div>
<div style="left:1511.8px;top:166.9px;width:24.2px;height:14.1px;background:#ad8862;"></div>
<div style="left:1537.2px;top:166.9px;width:24.5px;height:14.1px;background:#c08c50;"></div>
<div style="left:1562.9px;top:166.9px;width:24px;height:14.1px;background:#c99a66;"></div>
<div style="left:1588.1px;top:166.9px;width:24.8px;height:14.1px;background:#d8b48e;"></div>
<div style="left:1614.1px;top:166.9px;width:24px;height:14.1px;background:#e6cdb6;"></div>
<div style="left:1639.3px;top:166.9px;width:23.1px;height:14.1px;background:#f2e8dc;"></div>
<div style="left:1434.1px;top:182.2px;width:26.3px;height:13.7px;background:#1b1d1b;"></div>
<div style="left:1460.4px;top:182.2px;width:24.6px;height:13.7px;background:#505a52;"></div>
<div style="left:1486.2px;top:182.2px;width:24.4px;height:13.7px;background:#65886a;"></div>
<div style="left:1511.8px;top:182.2px;width:24.2px;height:13.7px;background:#5ba563;"></div>
<div style="left:1537.2px;top:182.2px;width:24.5px;height:13.7px;background:#2db150;"></div>
<div style="left:1562.9px;top:182.2px;width:24px;height:13.7px;background:#6bbd6e;"></div>
<div style="left:1588.1px;top:182.2px;width:24.8px;height:13.7px;background:#96d096;"></div>
<div style="left:1614.1px;top:182.2px;width:24px;height:13.7px;background:#bce0ba;"></div>
<div style="left:1639.3px;top:182.2px;width:23.1px;height:13.7px;background:#def0dd;"></div>
<div style="left:1434.1px;top:197.1px;width:26.3px;height:13.6px;background:#1c1c1e;"></div>
<div style="left:1460.4px;top:197.1px;width:24.6px;height:13.6px;background:#585b62;"></div>
<div style="left:1486.2px;top:197.1px;width:24.4px;height:13.6px;background:#8a90a0;"></div>
<div style="left:1511.8px;top:197.1px;width:24.2px;height:13.6px;background:#9eacc6;"></div>
<div style="left:1537.2px;top:197.1px;width:24.5px;height:13.6px;background:#a9bde3;"></div>
<div style="left:1562.9px;top:197.1px;width:24px;height:13.6px;background:#b8c9ea;"></div>
<div style="left:1588.1px;top:197.1px;width:24.8px;height:13.6px;background:#c9d6ef;"></div>
<div style="left:1614.1px;top:197.1px;width:24px;height:13.6px;background:#dce4f5;"></div>
<div style="left:1639.3px;top:197.1px;width:23.1px;height:13.6px;background:#eef1fa;"></div>
<div style="left:1434.1px;top:211.9px;width:26.3px;height:13.8px;background:#1d1b1d;"></div>
<div style="left:1460.4px;top:211.9px;width:24.6px;height:13.8px;background:#5e535c;"></div>
<div style="left:1486.2px;top:211.9px;width:24.4px;height:13.8px;background:#957890;"></div>
<div style="left:1511.8px;top:211.9px;width:24.2px;height:13.8px;background:#b07da6;"></div>
<div style="left:1537.2px;top:211.9px;width:24.5px;height:13.8px;background:#bb6fae;"></div>
<div style="left:1562.9px;top:211.9px;width:24px;height:13.8px;background:#c98dc0;"></div>
<div style="left:1588.1px;top:211.9px;width:24.8px;height:13.8px;background:#d7aad0;"></div>
<div style="left:1614.1px;top:211.9px;width:24px;height:13.8px;background:#e5c8e0;"></div>
<div style="left:1639.3px;top:211.9px;width:23.1px;height:13.8px;background:#f2e5f0;"></div>
<svg style="left:1440px;top:318px;" width="14" height="10" viewBox="0 0 14 10"><rect x=".5" y=".5" width="13" height="9" fill="#9a9a9a" stroke="#d6d6d6"/><path d="M5 .5v9M9 .5v9M.5 5h13" stroke="#d6d6d6" stroke-width="1"/></svg>
<svg style="left:1453px;top:327px;" width="5" height="3" viewBox="0 0 5 3"><path d="M0 0h5L2.500 3z" fill="#d6d6d6"/></svg>
<span style="font-size:11px;line-height:14px;color:#e6e6e6;white-space:nowrap;-webkit-text-stroke:.22px #e6e6e6;letter-spacing:-0.48px;left:1466px;top:316.5px;">Ohne</span>
<svg style="left:1604px;top:317px;" width="13" height="13" viewBox="0 0 13 13"><circle cx="6.500" cy="6.500" r="5.800" fill="#8e8e8e" stroke="#d8d8d8" stroke-width="1"/><path d="M6.500 6.500L6.500 .8A5.700 5.700 0 0 1 12 4.800Z" fill="#cacaca"/><path d="M6.500 6.500L10.500 10.800A5.700 5.700 0 0 1 3 11Z" fill="#5e5e5e"/><circle cx="6.500" cy="6.500" r="1.300" fill="#222"/></svg>
<svg style="left:1628px;top:317px;" width="17" height="12" viewBox="0 0 17 12"><rect x="6.500" y=".5" width="10" height="9" fill="#a8a8a8" stroke="#dcdcdc"/><path d="M12 .5v9" stroke="#dcdcdc"/><path d="M0 8h6M3 5v6" stroke="#e8e8e8" stroke-width="1.800"/></svg>
<svg style="left:1658px;top:321px;" width="10" height="10" viewBox="0 0 10 10"><rect x="0" y="8" width="1" height="1" fill="#1f1f1f"/><rect x="2" y="6" width="1" height="1" fill="#1f1f1f"/><rect x="2" y="8" width="1" height="1" fill="#1f1f1f"/><rect x="4" y="4" width="1" height="1" fill="#1f1f1f"/><rect x="4" y="6" width="1" height="1" fill="#1f1f1f"/><rect x="4" y="8" width="1" height="1" fill="#1f1f1f"/><rect x="6" y="2" width="1" height="1" fill="#1f1f1f"/><rect x="6" y="4" width="1" height="1" fill="#1f1f1f"/><rect x="6" y="6" width="1" height="1" fill="#1f1f1f"/><rect x="6" y="8" width="1" height="1" fill="#1f1f1f"/><rect x="8" y="0" width="1" height="1" fill="#1f1f1f"/><rect x="8" y="2" width="1" height="1" fill="#1f1f1f"/><rect x="8" y="4" width="1" height="1" fill="#1f1f1f"/><rect x="8" y="6" width="1" height="1" fill="#1f1f1f"/><rect x="8" y="8" width="1" height="1" fill="#1f1f1f"/></svg>
<div style="left:1429.5px;top:335px;width:239px;height:16.5px;background:linear-gradient(#2b2b2b,#343434);"></div>
<div style="left:1429.5px;top:351.5px;width:239px;height:184px;background:#494949;border-top:1px solid #565656;"></div>
<div style="left:1429.5px;top:335px;width:43.5px;height:17.5px;background:#494949;border-top:1px solid #5c5c5c;border-right:1px solid #2a2a2a;"></div>
<span style="font-size:11px;line-height:14px;color:#f2f2f2;white-space:nowrap;font-weight:700;letter-spacing:-0.4px;left:1436px;top:336.2px;">Pinsel</span>
<svg style="left:1650px;top:340px;" width="15" height="8" viewBox="0 0 15 8"><path d="M0 1.500h5l-2.500 2.800z" fill="#e2e2e2"/><path d="M6.500 .5h8.500M6.500 2.500h8.500M6.500 4.500h8.500M6.500 6.500h8.500" stroke="#e2e2e2" stroke-width="1"/></svg>
<div style="left:1434px;top:358px;width:230px;height:158.5px;background:#494949;border:1px solid #2f2f2f;"></div>
<div style="left:1435px;top:359px;width:214.5px;height:31.5px;background:#e5e5e5;"></div>
<div style="left:1440px;top:374px;width:164px;height:2.2px;background:#000;"></div>
<span style="font-size:11px;line-height:14px;color:#151515;white-space:nowrap;-webkit-text-stroke:.22px #151515;letter-spacing:-0.38px;left:1609px;top:368.2px;">Einfach</span>
<div style="left:1650.5px;top:359.5px;width:12.5px;height:156px;background:#3a3a3a;border-left:1px solid #323232;"></div>
<svg style="left:1654px;top:363px;" width="7" height="4.5" viewBox="0 0 7 4.5"><path d="M0 4.5 H7 L3.5 0 Z" fill="#8a8a8a"/></svg>
<svg style="left:1654px;top:507px;" width="7" height="4.5" viewBox="0 0 7 4.5"><path d="M0 0H7 L3.5 4.5 Z" fill="#bdbdbd"/></svg>
<svg style="left:1437px;top:521px;" width="14" height="12" viewBox="0 0 14 12"><path d="M1 1v9M3.500 1v9" stroke="#d8d8d8" stroke-width="1.600"/><path d="M6 1.500l3.500 8.500" stroke="#d8d8d8" stroke-width="1.800"/><path d="M9 9.500h5l-2.500 2.500z" fill="#d8d8d8"/></svg>
<svg style="left:1552px;top:521px;" width="12" height="12" viewBox="0 0 12 12"><path d="M1 1l10 10M11 1L1 11" stroke="#6a6a6a" stroke-width="1.300"/></svg>
<svg style="left:1577px;top:521px;" width="12" height="12" viewBox="0 0 12 12"><rect x="1.500" y="1.500" width="9" height="9" fill="none" stroke="#6a6a6a"/><path d="M0 3.500h12M0 6h12M0 8.500h12" stroke="#6a6a6a" stroke-width="1"/></svg>
<svg style="left:1604px;top:521px;" width="12" height="12" viewBox="0 0 12 12"><path d="M1 1h10v10H5V5H1z" fill="#dedede"/><path d="M1 7l3 3H1z" fill="#dedede"/></svg>
<svg style="left:1629px;top:520px;" width="12" height="13" viewBox="0 0 12 13"><path d="M0 3h12M4 3V1h4v2" stroke="#6a6a6a" stroke-width="1.200" fill="none"/><path d="M1.500 4.500h9L9.800 12.500H2.200z" fill="none" stroke="#6a6a6a" stroke-width="1.200"/><path d="M4.300 5.500v6M6 5.500v6M7.700 5.500v6" stroke="#6a6a6a" stroke-width=".9"/></svg>
<svg style="left:1658px;top:525px;" width="10" height="10" viewBox="0 0 10 10"><rect x="0" y="8" width="1" height="1" fill="#1f1f1f"/><rect x="2" y="6" width="1" height="1" fill="#1f1f1f"/><rect x="2" y="8" width="1" height="1" fill="#1f1f1f"/><rect x="4" y="4" width="1" height="1" fill="#1f1f1f"/><rect x="4" y="6" width="1" height="1" fill="#1f1f1f"/><rect x="4" y="8" width="1" height="1" fill="#1f1f1f"/><rect x="6" y="2" width="1" height="1" fill="#1f1f1f"/><rect x="6" y="4" width="1" height="1" fill="#1f1f1f"/><rect x="6" y="6" width="1" height="1" fill="#1f1f1f"/><rect x="6" y="8" width="1" height="1" fill="#1f1f1f"/><rect x="8" y="0" width="1" height="1" fill="#1f1f1f"/><rect x="8" y="2" width="1" height="1" fill="#1f1f1f"/><rect x="8" y="4" width="1" height="1" fill="#1f1f1f"/><rect x="8" y="6" width="1" height="1" fill="#1f1f1f"/><rect x="8" y="8" width="1" height="1" fill="#1f1f1f"/></svg>
<div style="left:1429.5px;top:539px;width:239px;height:16.5px;background:linear-gradient(#2b2b2b,#343434);"></div>
<div style="left:1429.5px;top:555.5px;width:239px;height:104.5px;background:#494949;border-top:1px solid #565656;"></div>
<div style="left:1429.5px;top:539px;width:62.5px;height:17.5px;background:#494949;border-top:1px solid #5c5c5c;border-right:1px solid #2a2a2a;"></div>
<span style="font-size:11px;line-height:14px;color:#f2f2f2;white-space:nowrap;font-weight:700;letter-spacing:-0.32px;left:1436px;top:540.2px;">Aussehen</span>
<svg style="left:1650px;top:544px;" width="15" height="8" viewBox="0 0 15 8"><path d="M0 1.500h5l-2.500 2.800z" fill="#e2e2e2"/><path d="M6.500 .5h8.500M6.500 2.500h8.500M6.500 4.500h8.500M6.500 6.500h8.500" stroke="#e2e2e2" stroke-width="1"/></svg>
<div style="left:1434px;top:562px;width:230px;height:78.5px;background:#494949;border:1px solid #2f2f2f;"></div>
<div style="left:1435.5px;top:587px;width:215px;height:1px;background:#303030;"></div>
<div style="left:1435.5px;top:612.5px;width:215px;height:1px;background:#303030;"></div>
<div style="left:1459.5px;top:588px;width:1px;height:52px;background:#303030;"></div>
<div style="left:1438px;top:566px;width:18.5px;height:18.5px;background:#fcca83;border:1px solid #fafafa;"></div>
<span style="font-size:11px;line-height:14px;color:#f0f0f0;white-space:nowrap;font-weight:700;letter-spacing:-0.58px;left:1482.5px;top:568.5px;">Pfad</span>
<svg style="left:1440px;top:596px;" width="13" height="8" viewBox="0 0 13 8"><path d="M.5 4C3 .6 10 .6 12.500 4 10 7.400 3 7.400 .5 4z" fill="#bdbdbd" stroke="#d8d8d8" stroke-width=".8"/><circle cx="6.500" cy="4" r="2.400" fill="#555"/><circle cx="7.300" cy="3.300" r=".9" fill="#e8e8e8"/></svg>
<svg style="left:1440px;top:621px;" width="13" height="8" viewBox="0 0 13 8"><path d="M.5 4C3 .6 10 .6 12.500 4 10 7.400 3 7.400 .5 4z" fill="#bdbdbd" stroke="#d8d8d8" stroke-width=".8"/><circle cx="6.500" cy="4" r="2.400" fill="#555"/><circle cx="7.300" cy="3.300" r=".9" fill="#e8e8e8"/></svg>
<svg style="left:1465px;top:596px;" width="6" height="8" viewBox="0 0 6 8"><path d="M0 0V8 L6 4 Z" fill="#e8e8e8"/></svg>
<svg style="left:1465px;top:621px;" width="6" height="8" viewBox="0 0 6 8"><path d="M0 0V8 L6 4 Z" fill="#e8e8e8"/></svg>
<span style="font-size:11px;line-height:14px;color:#e8954e;white-space:nowrap;font-weight:700;letter-spacing:-0.53px;left:1482px;top:593px;">Kontur:</span>
<div style="left:1482px;top:606.5px;width:36px;height:1px;border-top:1px dotted #e8954e;"></div>
<span style="font-size:11px;line-height:14px;color:#eeeeee;white-space:nowrap;font-weight:700;letter-spacing:-0.79px;left:1482.5px;top:618px;">Fläche:</span>
<div style="left:1560px;top:592px;width:16.5px;height:16.5px;background:#fff;border:1px solid #fff;box-shadow:inset 0 0 0 1px #222;"></div>
<svg style="left:1560px;top:592px;" width="16.5" height="16.5" viewBox="0 0 16.5 16.5"><path d="M4 12.500L12.500 4" stroke="#e0103a" stroke-width="2"/></svg>
<div style="left:1560px;top:617px;width:16.5px;height:16.5px;background:#fcca83;border:1px solid #fff;box-shadow:inset 0 0 0 1px #222;"></div>
<div style="left:1651px;top:563px;width:12.5px;height:76.5px;background:#3a3a3a;border-left:1px solid #323232;"></div>
<svg style="left:1654px;top:568px;" width="7" height="4.5" viewBox="0 0 7 4.5"><path d="M0 4.5 H7 L3.5 0 Z" fill="#e0e0e0"/></svg>
<svg style="left:1654px;top:632px;" width="7" height="4.5" viewBox="0 0 7 4.5"><path d="M0 0H7 L3.5 4.5 Z" fill="#e0e0e0"/></svg>
<div style="left:1652px;top:579px;width:11px;height:35px;background:#8c8c8c;"></div>
<svg style="left:1441px;top:645px;" width="11" height="11" viewBox="0 0 11 11"><rect x="1" y="1" width="9" height="9" fill="none" stroke="#e2e2e2" stroke-width="1.700"/></svg>
<svg style="left:1467px;top:645px;" width="11" height="11" viewBox="0 0 11 11"><rect x=".5" y=".5" width="10" height="10" fill="none" stroke="#d0d0d0" stroke-width="1"/><rect x="2.500" y="2.500" width="6" height="6" fill="#bdbdbd"/></svg>
<span style="font-size:14px;line-height:16px;color:#dcdcdc;white-space:nowrap;font-family:'Liberation Serif',serif;font-style:italic;letter-spacing:0.95px;left:1490px;top:642px;">fx</span>
<svg style="left:1502px;top:654px;" width="5" height="3" viewBox="0 0 5 3"><path d="M0 0h5L2.500 3z" fill="#dcdcdc"/></svg>
<svg style="left:1578px;top:644px;" width="12" height="12" viewBox="0 0 12 12"><circle cx="6" cy="6" r="4.800" fill="none" stroke="#dedede" stroke-width="1.500"/><path d="M2.600 2.600l6.800 6.800" stroke="#dedede" stroke-width="1.500"/></svg>
<svg style="left:1604px;top:645px;" width="12" height="12" viewBox="0 0 12 12"><path d="M1 1h10v10H5V5H1z" fill="#5e5e5e"/><path d="M1 7l3 3H1z" fill="#5e5e5e"/></svg>
<svg style="left:1629px;top:644px;" width="12" height="13" viewBox="0 0 12 13"><path d="M0 3h12M4 3V1h4v2" stroke="#626262" stroke-width="1.200" fill="none"/><path d="M1.500 4.500h9L9.800 12.500H2.200z" fill="none" stroke="#626262" stroke-width="1.200"/><path d="M4.300 5.500v6M6 5.500v6M7.700 5.500v6" stroke="#626262" stroke-width=".9"/></svg>
<div style="left:1429.5px;top:663px;width:239px;height:16.5px;background:linear-gradient(#2b2b2b,#343434);"></div>
<div style="left:1429.5px;top:679.5px;width:239px;height:295.5px;background:#494949;border-top:1px solid #565656;"></div>
<div style="left:1429.5px;top:663px;width:99px;height:17.5px;background:#494949;border-top:1px solid #5c5c5c;border-right:1px solid #2a2a2a;"></div>
<svg style="left:1434px;top:668px;" width="6" height="9" viewBox="0 0 6 9"><path d="M.8 3.200L3 1l2.200 2.200M.8 5.800L3 8l2.200-2.200" fill="none" stroke="#e6e6e6" stroke-width="1.100"/></svg>
<span style="font-size:11px;line-height:14px;color:#f2f2f2;white-space:nowrap;font-weight:700;letter-spacing:-0.01px;left:1442px;top:664.2px;">Transformieren</span>
<div style="left:1580px;top:664px;width:1px;height:15.5px;background:#242424;"></div>
<div style="left:1581px;top:664px;width:1px;height:15.5px;background:#3e3e3e;"></div>
<span style="font-size:11px;line-height:14px;color:#b2b2b2;white-space:nowrap;font-weight:700;letter-spacing:-0.25px;left:1535px;top:664.2px;">Pathfind</span>
<div style="left:1632px;top:664px;width:1px;height:15.5px;background:#242424;"></div>
<div style="left:1633px;top:664px;width:1px;height:15.5px;background:#3e3e3e;"></div>
<span style="font-size:11px;line-height:14px;color:#b2b2b2;white-space:nowrap;font-weight:700;letter-spacing:-0.2px;left:1585px;top:664.2px;">Ausricht</span>
<svg style="left:1650px;top:668px;" width="15" height="8" viewBox="0 0 15 8"><path d="M0 1.500h5l-2.500 2.800z" fill="#e2e2e2"/><path d="M6.500 .5h8.500M6.500 2.500h8.500M6.500 4.500h8.500M6.500 6.500h8.500" stroke="#e2e2e2" stroke-width="1"/></svg>
<svg style="left:1434px;top:700px;" width="19" height="19" viewBox="0 0 19 19"><rect x="0.5" y="0.5" width="4" height="4" fill="#dedede" stroke="#dedede" stroke-width="1"/><rect x="0.5" y="7.5" width="4" height="4" fill="#494949" stroke="#dedede" stroke-width="1"/><rect x="0.5" y="14.5" width="4" height="4" fill="#494949" stroke="#dedede" stroke-width="1"/><rect x="7.5" y="0.5" width="4" height="4" fill="#494949" stroke="#dedede" stroke-width="1"/><rect x="7.5" y="7.5" width="4" height="4" fill="#494949" stroke="#dedede" stroke-width="1"/><rect x="7.5" y="14.5" width="4" height="4" fill="#494949" stroke="#dedede" stroke-width="1"/><rect x="14.5" y="0.5" width="4" height="4" fill="#494949" stroke="#dedede" stroke-width="1"/><rect x="14.5" y="7.5" width="4" height="4" fill="#494949" stroke="#dedede" stroke-width="1"/><rect x="14.5" y="14.5" width="4" height="4" fill="#494949" stroke="#dedede" stroke-width="1"/><path d="M5 2.500h2M12 2.500h2M5 16.500h2M12 16.500h2M2.500 5v2M2.500 12v2M16.500 5v2M16.500 12v2" stroke="#dedede" stroke-width="1"/></svg>
<span style="font-size:10.5px;line-height:14px;color:#d8d8d8;white-space:nowrap;font-weight:700;letter-spacing:-0.42px;left:1467.58px;top:689.8px;">x:</span>
<span style="font-size:10.5px;line-height:14px;color:#d8d8d8;white-space:nowrap;font-weight:700;letter-spacing:-0.42px;left:1467.58px;top:715.5px;">y:</span>
<span style="font-size:10.5px;line-height:14px;color:#d8d8d8;white-space:nowrap;font-weight:700;letter-spacing:-1.04px;left:1552.46px;top:689.8px;">B:</span>
<span style="font-size:10.5px;line-height:14px;color:#d8d8d8;white-space:nowrap;font-weight:700;letter-spacing:-0.79px;left:1552.21px;top:715.5px;">H:</span>
<div style="left:1481.5px;top:687.5px;width:64px;height:18px;background:#a4a4a4;border:1px solid #2b2b2b;box-shadow:inset 0 1px 0 rgba(0,0,0,.12);"></div>
<span style="font-size:11px;line-height:14px;color:#0c0c0c;white-space:nowrap;left:1485.5px;top:689.2px;-webkit-text-stroke:.2px #0c0c0c;">0 mm</span>
<div style="left:1567.5px;top:687.5px;width:64px;height:18px;background:#a4a4a4;border:1px solid #2b2b2b;box-shadow:inset 0 1px 0 rgba(0,0,0,.12);"></div>
<span style="font-size:11px;line-height:14px;color:#0c0c0c;white-space:nowrap;left:1571.5px;top:689.2px;-webkit-text-stroke:.2px #0c0c0c;">300 mm</span>
<div style="left:1481.5px;top:713.5px;width:64px;height:18px;background:#a4a4a4;border:1px solid #2b2b2b;box-shadow:inset 0 1px 0 rgba(0,0,0,.12);"></div>
<span style="font-size:11px;line-height:14px;color:#0c0c0c;white-space:nowrap;left:1485.5px;top:715.2px;-webkit-text-stroke:.2px #0c0c0c;">0 mm</span>
<div style="left:1567.5px;top:713.5px;width:64px;height:18px;background:#a4a4a4;border:1px solid #2b2b2b;box-shadow:inset 0 1px 0 rgba(0,0,0,.12);"></div>
<span style="font-size:11px;line-height:14px;color:#0c0c0c;white-space:nowrap;left:1571.5px;top:715.2px;-webkit-text-stroke:.2px #0c0c0c;">1300 mm</span>
<svg style="left:1641px;top:702px;" width="16" height="16" viewBox="0 0 16 16"><path d="M5.700 7V4.300a2.300 2.300 0 0 1 4.600 0V7M5.700 9v2.700a2.300 2.300 0 0 0 4.600 0V9" fill="none" stroke="#dcdcdc" stroke-width="1.500"/><path d="M8 5.800v4.400" stroke="#dcdcdc" stroke-width="1.400"/><path d="M.5 8h3.200M12.300 8h3.200M1.400 4.200l2.500 1.500M14.600 4.200l-2.500 1.500M1.400 11.800l2.500-1.500M14.600 11.800l-2.500-1.500" stroke="#dcdcdc" stroke-width="1"/></svg>
<svg style="left:1462px;top:744px;" width="12" height="9" viewBox="0 0 12 9"><path d="M.8 8.200h10.400L7.500 1z" fill="none" stroke="#d8d8d8" stroke-width="1.100" transform="skewX(-12) translate(2,0)"/></svg>
<span style="font-size:11px;line-height:14px;color:#d8d8d8;white-space:nowrap;font-weight:700;left:1474px;top:743px;">:</span>
<div style="left:1481.5px;top:739.5px;width:44px;height:18px;background:#a4a4a4;border:1px solid #2b2b2b;box-shadow:inset 0 1px 0 rgba(0,0,0,.12);"></div>
<span style="font-size:11px;line-height:14px;color:#0c0c0c;white-space:nowrap;left:1485.5px;top:741.2px;-webkit-text-stroke:.2px #0c0c0c;">0°</span>
<div style="left:1525px;top:739.5px;width:15.5px;height:18px;background:linear-gradient(#636363,#505050);border:1px solid #2b2b2b;"></div>
<svg style="left:1529px;top:747px;" width="7" height="4" viewBox="0 0 7 4"><path d="M0 0H7 L3.5 4 Z" fill="#ececec"/></svg>
<svg style="left:1548px;top:744px;" width="13" height="9" viewBox="0 0 13 9"><path d="M4 .8h8L8.500 8.200h-8z" fill="none" stroke="#d8d8d8" stroke-width="1.300"/></svg>
<span style="font-size:11px;line-height:14px;color:#d8d8d8;white-space:nowrap;font-weight:700;left:1560px;top:743px;">:</span>
<div style="left:1567.5px;top:739.5px;width:44px;height:18px;background:#a4a4a4;border:1px solid #2b2b2b;box-shadow:inset 0 1px 0 rgba(0,0,0,.12);"></div>
<span style="font-size:11px;line-height:14px;color:#0c0c0c;white-space:nowrap;left:1571.5px;top:741.2px;-webkit-text-stroke:.2px #0c0c0c;">0°</span>
<div style="left:1611px;top:739.5px;width:15.5px;height:18px;background:linear-gradient(#636363,#505050);border:1px solid #2b2b2b;"></div>
<svg style="left:1615px;top:747px;" width="7" height="4" viewBox="0 0 7 4"><path d="M0 0H7 L3.5 4 Z" fill="#ececec"/></svg>
<div style="left:1435px;top:764.5px;width:228px;height:1px;background:#383838;"></div>
<div style="left:1435px;top:765.5px;width:228px;height:1px;background:#525252;"></div>
<span style="font-size:11px;line-height:14px;color:#e2e2e2;white-space:nowrap;-webkit-text-stroke:.22px #e2e2e2;letter-spacing:-0.18px;left:1437.5px;top:771.4px;">Rechteckeigenschaften:</span>
<svg style="left:1440px;top:798px;" width="15" height="8" viewBox="0 0 15 8"><path d="M.5 0v8M14.500 0v8M1 4h13" stroke="#dcdcdc" stroke-width="1.200" fill="none"/><path d="M1 4l3.500-2.600v5.200zM14 4l-3.500-2.600v5.200z" fill="#dcdcdc"/></svg>
<div style="left:1460.5px;top:792.5px;width:72px;height:18px;background:#a4a4a4;border:1px solid #2b2b2b;box-shadow:inset 0 1px 0 rgba(0,0,0,.12);"></div>
<span style="font-size:11px;line-height:14px;color:#0c0c0c;white-space:nowrap;left:1464.5px;top:794.2px;-webkit-text-stroke:.2px #0c0c0c;">300 mm</span>
<svg style="left:1541px;top:794px;" width="16" height="16" viewBox="0 0 16 16"><path d="M5.700 7V4.300a2.300 2.300 0 0 1 4.600 0V7M5.700 9v2.700a2.300 2.300 0 0 0 4.600 0V9" fill="none" stroke="#dcdcdc" stroke-width="1.500"/><path d="M8 5.800v4.400" stroke="#dcdcdc" stroke-width="1.400"/><path d="M.5 8h3.200M12.300 8h3.200M1.400 4.200l2.500 1.500M14.600 4.200l-2.500 1.500M1.400 11.800l2.500-1.500M14.600 11.800l-2.500-1.500" stroke="#dcdcdc" stroke-width="1"/></svg>
<div style="left:1565.5px;top:792.5px;width:72px;height:18px;background:#a4a4a4;border:1px solid #2b2b2b;box-shadow:inset 0 1px 0 rgba(0,0,0,.12);"></div>
<span style="font-size:11px;line-height:14px;color:#0c0c0c;white-space:nowrap;left:1569.5px;top:794.2px;-webkit-text-stroke:.2px #0c0c0c;">1300 mm</span>
<svg style="left:1645px;top:794px;" width="8" height="15" viewBox="0 0 8 15"><path d="M0 .5h8M0 14.500h8M4 1v13" stroke="#dcdcdc" stroke-width="1.200" fill="none"/><path d="M4 1l-2.600 3.500h5.200zM4 14l-2.600-3.500h5.200z" fill="#dcdcdc"/></svg>
<svg style="left:1443px;top:822px;" width="16" height="16" viewBox="0 0 16 16"><path d="M8 2.500a6 6 0 1 1-5.800 4.500" fill="none" stroke="#c8c8c8" stroke-width="1.300" stroke-dasharray="2 1.700"/><path d="M8 2.500a6 6 0 0 0-4.200 1.700" fill="none" stroke="#d8d8d8" stroke-width="1.400"/><path d="M1.500 2l4.300.6L3 6.200z" fill="#d8d8d8"/></svg>
<div style="left:1464.5px;top:821.5px;width:52.5px;height:18px;background:#a4a4a4;border:1px solid #2b2b2b;box-shadow:inset 0 1px 0 rgba(0,0,0,.12);"></div>
<span style="font-size:11px;line-height:14px;color:#0c0c0c;white-space:nowrap;left:1468.5px;top:823.2px;-webkit-text-stroke:.2px #0c0c0c;">0°</span>
<div style="left:1516.5px;top:821.5px;width:15.5px;height:18px;background:linear-gradient(#636363,#505050);border:1px solid #2b2b2b;"></div>
<svg style="left:1521px;top:829px;" width="7" height="4" viewBox="0 0 7 4"><path d="M0 0H7 L3.5 4 Z" fill="#ececec"/></svg>
<svg style="left:1441px;top:851px;" width="17" height="15" viewBox="0 0 17 15"><path d="M2.500 8V2.500H8" stroke="#cfcfcf" stroke-width="1.500" stroke-dasharray="1.500 1.500" fill="none"/><path d="M10 2.500h5" stroke="#cfcfcf" stroke-width="1.600"/><path d="M2.500 10v4" stroke="#cfcfcf" stroke-width="1.600"/></svg>
<svg style="left:1455px;top:864px;" width="4" height="3" viewBox="0 0 4 3"><path d="M0 0h4L2 3z" fill="#d8d8d8"/></svg>
<svg style="left:1641px;top:851px;transform:scaleX(-1);" width="17" height="15" viewBox="0 0 17 15"><path d="M2.500 8V2.500H8" stroke="#cfcfcf" stroke-width="1.500" stroke-dasharray="1.500 1.500" fill="none"/><path d="M10 2.500h5" stroke="#cfcfcf" stroke-width="1.600"/><path d="M2.500 10v4" stroke="#cfcfcf" stroke-width="1.600"/></svg>
<svg style="left:1655px;top:864px;" width="4" height="3" viewBox="0 0 4 3"><path d="M0 0h4L2 3z" fill="#d8d8d8"/></svg>
<svg style="left:1441px;top:881px;transform:scaleY(-1);" width="17" height="15" viewBox="0 0 17 15"><path d="M2.500 8V2.500H8" stroke="#cfcfcf" stroke-width="1.500" stroke-dasharray="1.500 1.500" fill="none"/><path d="M10 2.500h5" stroke="#cfcfcf" stroke-width="1.600"/><path d="M2.500 10v4" stroke="#cfcfcf" stroke-width="1.600"/></svg>
<svg style="left:1455px;top:895px;" width="4" height="3" viewBox="0 0 4 3"><path d="M0 0h4L2 3z" fill="#d8d8d8"/></svg>
<svg style="left:1641px;top:881px;transform:scale(-1,-1);" width="17" height="15" viewBox="0 0 17 15"><path d="M2.500 8V2.500H8" stroke="#cfcfcf" stroke-width="1.500" stroke-dasharray="1.500 1.500" fill="none"/><path d="M10 2.500h5" stroke="#cfcfcf" stroke-width="1.600"/><path d="M2.500 10v4" stroke="#cfcfcf" stroke-width="1.600"/></svg>
<svg style="left:1655px;top:895px;" width="4" height="3" viewBox="0 0 4 3"><path d="M0 0h4L2 3z" fill="#d8d8d8"/></svg>
<div style="left:1465.5px;top:849.5px;width:17px;height:18px;background:linear-gradient(#616161,#525252);border:1px solid #2b2b2b;"></div>
<div style="left:1466.5px;top:858px;width:15px;height:1px;background:#2f2f2f;"></div>
<svg style="left:1470px;top:853px;" width="7" height="4" viewBox="0 0 7 4"><path d="M0 4 H7 L3.5 0 Z" fill="#e4e4e4"/></svg>
<svg style="left:1470px;top:861px;" width="7" height="4" viewBox="0 0 7 4"><path d="M0 0H7 L3.5 4 Z" fill="#e4e4e4"/></svg>
<div style="left:1482px;top:849.5px;width:50.5px;height:18px;background:#a4a4a4;border:1px solid #2b2b2b;box-shadow:inset 0 1px 0 rgba(0,0,0,.12);"></div>
<span style="font-size:11px;line-height:14px;color:#0c0c0c;white-space:nowrap;left:1486px;top:851.2px;-webkit-text-stroke:.2px #0c0c0c;">0 mm</span>
<div style="left:1565.5px;top:849.5px;width:17px;height:18px;background:linear-gradient(#616161,#525252);border:1px solid #2b2b2b;"></div>
<div style="left:1566.5px;top:858px;width:15px;height:1px;background:#2f2f2f;"></div>
<svg style="left:1570px;top:853px;" width="7" height="4" viewBox="0 0 7 4"><path d="M0 4 H7 L3.5 0 Z" fill="#e4e4e4"/></svg>
<svg style="left:1570px;top:861px;" width="7" height="4" viewBox="0 0 7 4"><path d="M0 0H7 L3.5 4 Z" fill="#e4e4e4"/></svg>
<div style="left:1582px;top:849.5px;width:50.5px;height:18px;background:#a4a4a4;border:1px solid #2b2b2b;box-shadow:inset 0 1px 0 rgba(0,0,0,.12);"></div>
<span style="font-size:11px;line-height:14px;color:#0c0c0c;white-space:nowrap;left:1586px;top:851.2px;-webkit-text-stroke:.2px #0c0c0c;">0 mm</span>
<div style="left:1465.5px;top:880.5px;width:17px;height:18px;background:linear-gradient(#616161,#525252);border:1px solid #2b2b2b;"></div>
<div style="left:1466.5px;top:889px;width:15px;height:1px;background:#2f2f2f;"></div>
<svg style="left:1470px;top:884px;" width="7" height="4" viewBox="0 0 7 4"><path d="M0 4 H7 L3.5 0 Z" fill="#e4e4e4"/></svg>
<svg style="left:1470px;top:892px;" width="7" height="4" viewBox="0 0 7 4"><path d="M0 0H7 L3.5 4 Z" fill="#e4e4e4"/></svg>
<div style="left:1482px;top:880.5px;width:50.5px;height:18px;background:#a4a4a4;border:1px solid #2b2b2b;box-shadow:inset 0 1px 0 rgba(0,0,0,.12);"></div>
<span style="font-size:11px;line-height:14px;color:#0c0c0c;white-space:nowrap;left:1486px;top:882.2px;-webkit-text-stroke:.2px #0c0c0c;">0 mm</span>
<div style="left:1565.5px;top:880.5px;width:17px;height:18px;background:linear-gradient(#616161,#525252);border:1px solid #2b2b2b;"></div>
<div style="left:1566.5px;top:889px;width:15px;height:1px;background:#2f2f2f;"></div>
<svg style="left:1570px;top:884px;" width="7" height="4" viewBox="0 0 7 4"><path d="M0 4 H7 L3.5 0 Z" fill="#e4e4e4"/></svg>
<svg style="left:1570px;top:892px;" width="7" height="4" viewBox="0 0 7 4"><path d="M0 0H7 L3.5 4 Z" fill="#e4e4e4"/></svg>
<div style="left:1582px;top:880.5px;width:50.5px;height:18px;background:#a4a4a4;border:1px solid #2b2b2b;box-shadow:inset 0 1px 0 rgba(0,0,0,.12);"></div>
<span style="font-size:11px;line-height:14px;color:#0c0c0c;white-space:nowrap;left:1586px;top:882.2px;-webkit-text-stroke:.2px #0c0c0c;">0 mm</span>
<div style="left:1537px;top:862.5px;width:24px;height:23px;background:#333333;border:1px solid #2a2a2a;box-shadow:0 1px 0 #565656;"></div>
<svg style="left:1544px;top:866px;" width="10" height="16" viewBox="0 0 10 16"><path d="M2.500 7V4.300a2.500 2.500 0 0 1 5 0V7M2.500 9v2.700a2.500 2.500 0 0 0 5 0V9" fill="none" stroke="#e4e4e4" stroke-width="1.700"/><path d="M5 5.800v4.400" stroke="#e4e4e4" stroke-width="1.500"/></svg>
<div style="left:1435px;top:908.5px;width:228px;height:1px;background:#383838;"></div>
<div style="left:1435px;top:909.5px;width:228px;height:1px;background:#525252;"></div>
<div style="left:1435.5px;top:916.5px;width:11.5px;height:11.5px;background:linear-gradient(#5a5a5a,#505050);border:1px solid #2c2c2c;"></div>
<span style="font-size:11px;line-height:14px;color:#e6e6e6;white-space:nowrap;-webkit-text-stroke:.22px #e6e6e6;letter-spacing:-0.14px;left:1451.5px;top:915.3px;">Rechteck-Ecken skalieren</span>
<div style="left:1435.5px;top:936.5px;width:11.5px;height:11.5px;background:linear-gradient(#5a5a5a,#505050);border:1px solid #2c2c2c;"></div>
<span style="font-size:11px;line-height:14px;color:#e6e6e6;white-space:nowrap;-webkit-text-stroke:.22px #e6e6e6;letter-spacing:-0.04px;left:1451.5px;top:935.3px;">Konturen und Effekte skalieren</span>
<div style="left:1435.5px;top:956.5px;width:11.5px;height:11.5px;background:linear-gradient(#5a5a5a,#505050);border:1px solid #2c2c2c;"></div>
<span style="font-size:11px;line-height:14px;color:#e6e6e6;white-space:nowrap;-webkit-text-stroke:.22px #e6e6e6;letter-spacing:-0.07px;left:1451.5px;top:955.3px;">An Pixelraster ausrichten</span>
<div style="left:1672px;top:79px;width:246.5px;height:16.5px;background:linear-gradient(#2b2b2b,#343434);"></div>
<div style="left:1672px;top:95.5px;width:246.5px;height:317px;background:#494949;border-top:1px solid #565656;"></div>
<div style="left:1748px;top:80px;width:1px;height:15.5px;background:#242424;"></div>
<div style="left:1749px;top:80px;width:1px;height:15.5px;background:#3e3e3e;"></div>
<span style="font-size:11px;line-height:14px;color:#b2b2b2;white-space:nowrap;font-weight:700;letter-spacing:-0.34px;left:1679px;top:80.2px;">Zeichenfläche</span>
<div style="left:1824px;top:80px;width:1px;height:15.5px;background:#242424;"></div>
<div style="left:1825px;top:80px;width:1px;height:15.5px;background:#3e3e3e;"></div>
<span style="font-size:11px;line-height:14px;color:#b2b2b2;white-space:nowrap;font-weight:700;letter-spacing:-0.16px;left:1755px;top:80.2px;">Verknüpfung(</span>
<div style="left:1825px;top:79px;width:53px;height:17.5px;background:#494949;border-top:1px solid #5c5c5c;border-right:1px solid #2a2a2a;border-left:1px solid #2a2a2a;"></div>
<svg style="left:1829px;top:84px;" width="6" height="9" viewBox="0 0 6 9"><path d="M.8 3.200L3 1l2.200 2.200M.8 5.800L3 8l2.200-2.200" fill="none" stroke="#e6e6e6" stroke-width="1.100"/></svg>
<span style="font-size:11px;line-height:14px;color:#f2f2f2;white-space:nowrap;font-weight:700;letter-spacing:-0.34px;left:1838px;top:80.2px;">Kontur</span>
<svg style="left:1900px;top:84px;" width="15" height="8" viewBox="0 0 15 8"><path d="M0 1.500h5l-2.500 2.800z" fill="#e2e2e2"/><path d="M6.500 .5h8.500M6.500 2.500h8.500M6.500 4.500h8.500M6.500 6.500h8.500" stroke="#e2e2e2" stroke-width="1"/></svg>
<span style="font-size:11px;line-height:14px;color:#f0f0f0;white-space:nowrap;font-weight:700;letter-spacing:-0.76px;left:1703.24px;top:105.5px;">Stärke:</span>
<div style="left:1741.5px;top:103.5px;width:17px;height:18px;background:linear-gradient(#616161,#525252);border:1px solid #2b2b2b;"></div>
<div style="left:1742.5px;top:112px;width:15px;height:1px;background:#2f2f2f;"></div>
<svg style="left:1746px;top:107px;" width="7" height="4" viewBox="0 0 7 4"><path d="M0 4 H7 L3.5 0 Z" fill="#e4e4e4"/></svg>
<svg style="left:1746px;top:115px;" width="7" height="4" viewBox="0 0 7 4"><path d="M0 0H7 L3.5 4 Z" fill="#e4e4e4"/></svg>
<div style="left:1758.5px;top:103.5px;width:61px;height:18px;background:#a4a4a4;border:1px solid #2b2b2b;box-shadow:inset 0 1px 0 rgba(0,0,0,.12);"></div>
<div style="left:1819px;top:103.5px;width:15.5px;height:18px;background:linear-gradient(#636363,#505050);border:1px solid #2b2b2b;"></div>
<svg style="left:1823px;top:111px;" width="7" height="4" viewBox="0 0 7 4"><path d="M0 0H7 L3.5 4 Z" fill="#ececec"/></svg>
<span style="font-size:11px;line-height:14px;color:#9a9a9a;white-space:nowrap;-webkit-text-stroke:.22px #9a9a9a;letter-spacing:-0.22px;left:1684.78px;top:132px;">Abschluss:</span>
<div style="left:1741.5px;top:129px;width:69.7px;height:19px;background:#555555;border:1px solid #2f2f2f;"></div>
<div style="left:1764.4px;top:130px;width:1px;height:17px;background:#2f2f2f;"></div>
<div style="left:1787.3px;top:130px;width:1px;height:17px;background:#2f2f2f;"></div>
<svg style="left:1742px;top:129px;" width="23" height="19" viewBox="0 0 23 19"><rect x="9" y="4" width="8.500" height="11" fill="#7e7e7e"/><path d="M10.500 9.500H18" stroke="#3a3a3a" stroke-width="1"/><circle cx="10.500" cy="9.500" r="1.300" fill="#3a3a3a"/></svg>
<svg style="left:1765px;top:129px;" width="23" height="19" viewBox="0 0 23 19"><path d="M17.500 4H11a5.500 5.500 0 0 0 0 11h6.500z" fill="#7e7e7e"/><path d="M11 9.500H18" stroke="#3a3a3a" stroke-width="1"/><circle cx="11" cy="9.500" r="1.300" fill="#3a3a3a"/></svg>
<svg style="left:1788px;top:129px;" width="23" height="19" viewBox="0 0 23 19"><rect x="5.500" y="4" width="12" height="11" fill="#7e7e7e"/><path d="M11 9.500H18" stroke="#3a3a3a" stroke-width="1"/><circle cx="11" cy="9.500" r="1.300" fill="#3a3a3a"/></svg>
<span style="font-size:11px;line-height:14px;color:#9a9a9a;white-space:nowrap;-webkit-text-stroke:.22px #9a9a9a;letter-spacing:-0.7px;left:1711.3px;top:159px;">Ecke:</span>
<div style="left:1741.5px;top:156.5px;width:69.7px;height:19px;background:#555555;border:1px solid #2f2f2f;"></div>
<div style="left:1764.4px;top:157.5px;width:1px;height:17px;background:#2f2f2f;"></div>
<div style="left:1787.3px;top:157.5px;width:1px;height:17px;background:#2f2f2f;"></div>
<svg style="left:1742px;top:156px;" width="23" height="19" viewBox="0 0 23 19"><path d="M5.500 4h12v5h-6v6.500h-6z" fill="#7e7e7e"/><path d="M8.500 15.500V7h9" fill="none" stroke="#3a3a3a" stroke-width="1"/><circle cx="8.500" cy="7" r="1.300" fill="#3a3a3a"/></svg>
<svg style="left:1765px;top:156px;" width="23" height="19" viewBox="0 0 23 19"><path d="M5.500 9.500a5.500 5.500 0 0 1 5.500-5.500h6.500v5h-6v6.500h-6z" fill="#7e7e7e"/><path d="M8.500 15.500V7h9" fill="none" stroke="#3a3a3a" stroke-width="1"/><circle cx="8.500" cy="7" r="1.300" fill="#3a3a3a"/></svg>
<svg style="left:1788px;top:156px;" width="23" height="19" viewBox="0 0 23 19"><path d="M5.500 8.500l4.500-4.500h7.500v5h-6v6.500h-6z" fill="#7e7e7e"/><path d="M8.500 15.500V7h9" fill="none" stroke="#3a3a3a" stroke-width="1"/><circle cx="8.500" cy="7" r="1.300" fill="#3a3a3a"/></svg>
<span style="font-size:11px;line-height:14px;color:#9a9a9a;white-space:nowrap;-webkit-text-stroke:.22px #9a9a9a;letter-spacing:-0.58px;left:1823.42px;top:159px;">Max.:</span>
<div style="left:1855px;top:156.5px;width:41px;height:18px;background:#7b7b7b;border:1px solid #2b2b2b;box-shadow:inset 0 1px 0 rgba(0,0,0,.12);"></div>
<span style="font-size:11px;line-height:14px;color:#9a9a9a;white-space:nowrap;-webkit-text-stroke:.22px #9a9a9a;left:1900px;top:159.5px;">x</span>
<span style="font-size:11px;line-height:14px;color:#9a9a9a;white-space:nowrap;-webkit-text-stroke:.22px #9a9a9a;letter-spacing:-0.05px;left:1680.95px;top:186.5px;">Kont. ausr.:</span>
<div style="left:1741.5px;top:184px;width:69.7px;height:19px;background:#555555;border:1px solid #2f2f2f;"></div>
<div style="left:1764.4px;top:185px;width:1px;height:17px;background:#2f2f2f;"></div>
<div style="left:1787.3px;top:185px;width:1px;height:17px;background:#2f2f2f;"></div>
<svg style="left:1742px;top:184px;" width="23" height="19" viewBox="0 0 23 19"><path d="M5 3.500h5v8.500h8v4.500H5z" fill="#7e7e7e"/><path d="M7.500 3v11.500H18.500" fill="none" stroke="#3a3a3a" stroke-width="1"/></svg>
<svg style="left:1765px;top:184px;" width="23" height="19" viewBox="0 0 23 19"><path d="M7.500 3.500h3.500v8.500h7v3.500H7.500z" fill="#7e7e7e"/><path d="M7.500 3v12.500H18.500" fill="none" stroke="#3a3a3a" stroke-width="1"/></svg>
<svg style="left:1788px;top:184px;" width="23" height="19" viewBox="0 0 23 19"><path d="M4.500 3.500h4v8.500h10v4.500h-14z" fill="#7e7e7e"/><path d="M8.500 3v9H18.500" fill="none" stroke="#3a3a3a" stroke-width="1"/></svg>
<div style="left:1676px;top:209.5px;width:232px;height:1px;background:#383838;"></div>
<div style="left:1676px;top:210.5px;width:232px;height:1px;background:#525252;"></div>
<div style="left:1678.5px;top:221.5px;width:11.5px;height:11.5px;background:linear-gradient(#5a5a5a,#505050);border:1px solid #2c2c2c;"></div>
<div style="left:1681px;top:226.3px;width:6.5px;height:2px;background:#f0f0f0;"></div>
<span style="font-size:11px;line-height:14px;color:#ececec;white-space:nowrap;-webkit-text-stroke:.22px #ececec;letter-spacing:-0.11px;left:1694px;top:220.3px;">Gestrichelte Linie</span>
<div style="left:1828px;top:217.5px;width:77.5px;height:19px;background:#555;border:1px solid #2f2f2f;"></div>
<div style="left:1866px;top:218.5px;width:1px;height:17px;background:#2f2f2f;"></div>
<svg style="left:1833px;top:222px;" width="29" height="11" viewBox="0 0 29 11"><path d="M.5 10.500V.5H28.500V10.500z" fill="none" stroke="#8a8a8a" stroke-width="1.300" stroke-dasharray="7 5"/></svg>
<svg style="left:1872px;top:222px;" width="29" height="11" viewBox="0 0 29 11"><path d="M.5 10.500V.5H28.500V10.500z" fill="none" stroke="#8a8a8a" stroke-width="1.300" stroke-dasharray="4 3.500" stroke-dashoffset="2"/></svg>
<div style="left:1678.5px;top:244.5px;width:34.5px;height:18px;background:#7b7b7b;border:1px solid #2b2b2b;box-shadow:inset 0 1px 0 rgba(0,0,0,.12);"></div>
<span style="font-size:11px;line-height:14px;color:#9a9a9a;white-space:nowrap;-webkit-text-stroke:.22px #9a9a9a;letter-spacing:-0.19px;left:1682.11px;top:264.3px;">Strich</span>
<div style="left:1716.6px;top:244.5px;width:34.5px;height:18px;background:#7b7b7b;border:1px solid #2b2b2b;box-shadow:inset 0 1px 0 rgba(0,0,0,.12);"></div>
<span style="font-size:11px;line-height:14px;color:#9a9a9a;white-space:nowrap;-webkit-text-stroke:.22px #9a9a9a;letter-spacing:-0.27px;left:1719.66px;top:264.3px;">Lücke</span>
<div style="left:1754px;top:244.5px;width:34.5px;height:18px;background:#7b7b7b;border:1px solid #2b2b2b;box-shadow:inset 0 1px 0 rgba(0,0,0,.12);"></div>
<span style="font-size:11px;line-height:14px;color:#9a9a9a;white-space:nowrap;-webkit-text-stroke:.22px #9a9a9a;letter-spacing:-0.19px;left:1757.61px;top:264.3px;">Strich</span>
<div style="left:1791.6px;top:244.5px;width:34.5px;height:18px;background:#7b7b7b;border:1px solid #2b2b2b;box-shadow:inset 0 1px 0 rgba(0,0,0,.12);"></div>
<span style="font-size:11px;line-height:14px;color:#9a9a9a;white-space:nowrap;-webkit-text-stroke:.22px #9a9a9a;letter-spacing:-0.27px;left:1794.66px;top:264.3px;">Lücke</span>
<div style="left:1829.2px;top:244.5px;width:34.5px;height:18px;background:#7b7b7b;border:1px solid #2b2b2b;box-shadow:inset 0 1px 0 rgba(0,0,0,.12);"></div>
<span style="font-size:11px;line-height:14px;color:#9a9a9a;white-space:nowrap;-webkit-text-stroke:.22px #9a9a9a;letter-spacing:-0.19px;left:1832.81px;top:264.3px;">Strich</span>
<div style="left:1866.6px;top:244.5px;width:34.5px;height:18px;background:#7b7b7b;border:1px solid #2b2b2b;box-shadow:inset 0 1px 0 rgba(0,0,0,.12);"></div>
<span style="font-size:11px;line-height:14px;color:#9a9a9a;white-space:nowrap;-webkit-text-stroke:.22px #9a9a9a;letter-spacing:-0.27px;left:1869.66px;top:264.3px;">Lücke</span>
<div style="left:1676px;top:282px;width:232px;height:1px;background:#383838;"></div>
<div style="left:1676px;top:283px;width:232px;height:1px;background:#525252;"></div>
<span style="font-size:11px;line-height:14px;color:#9a9a9a;white-space:nowrap;-webkit-text-stroke:.22px #9a9a9a;letter-spacing:-0.1px;left:1677.9px;top:293.3px;">Pfeilspitzen:</span>
<div style="left:1741.5px;top:291.5px;width:44.5px;height:18px;background:#7b7b7b;border:1px solid #2b2b2b;box-shadow:inset 0 1px 0 rgba(0,0,0,.12);"></div>
<div style="left:1785.5px;top:291.5px;width:15.5px;height:18px;background:#525252;border:1px solid #2b2b2b;"></div>
<svg style="left:1790px;top:299px;" width="7" height="4" viewBox="0 0 7 4"><path d="M0 0H7 L3.5 4 Z" fill="#8a8a8a"/></svg>
<div style="left:1813.5px;top:291.5px;width:44px;height:18px;background:#7b7b7b;border:1px solid #2b2b2b;box-shadow:inset 0 1px 0 rgba(0,0,0,.12);"></div>
<div style="left:1857px;top:291.5px;width:15.5px;height:18px;background:#525252;border:1px solid #2b2b2b;"></div>
<svg style="left:1861px;top:299px;" width="7" height="4" viewBox="0 0 7 4"><path d="M0 0H7 L3.5 4 Z" fill="#8a8a8a"/></svg>
<svg style="left:1888px;top:294px;" width="15" height="12" viewBox="0 0 15 12"><path d="M1 3.500h11M15 3.500l-4-3v6zM14 8.500H3M0 8.500l4-3v6z" stroke="#7c7c7c" stroke-width="1.300" fill="#7c7c7c"/></svg>
<span style="font-size:11px;line-height:14px;color:#9a9a9a;white-space:nowrap;-webkit-text-stroke:.22px #9a9a9a;letter-spacing:-0.19px;left:1688.81px;top:323.5px;">Skalieren:</span>
<div style="left:1741.5px;top:322px;width:17px;height:17.5px;background:#5a5a5a;border:1px solid #2b2b2b;"></div>
<div style="left:1742.5px;top:330.25px;width:15px;height:1px;background:#2f2f2f;"></div>
<svg style="left:1746px;top:325px;" width="7" height="4" viewBox="0 0 7 4"><path d="M0 4 H7 L3.5 0 Z" fill="#8c8c8c"/></svg>
<svg style="left:1746px;top:333px;" width="7" height="4" viewBox="0 0 7 4"><path d="M0 0H7 L3.5 4 Z" fill="#8c8c8c"/></svg>
<div style="left:1758px;top:322px;width:42.5px;height:17.5px;background:#7b7b7b;border:1px solid #2b2b2b;box-shadow:inset 0 1px 0 rgba(0,0,0,.12);"></div>
<span style="font-size:11px;line-height:14px;color:#959595;white-space:nowrap;left:1762px;top:323.45px;-webkit-text-stroke:.2px #959595;">100%</span>
<div style="left:1813.5px;top:322px;width:17px;height:17.5px;background:#5a5a5a;border:1px solid #2b2b2b;"></div>
<div style="left:1814.5px;top:330.25px;width:15px;height:1px;background:#2f2f2f;"></div>
<svg style="left:1818px;top:325px;" width="7" height="4" viewBox="0 0 7 4"><path d="M0 4 H7 L3.5 0 Z" fill="#8c8c8c"/></svg>
<svg style="left:1818px;top:333px;" width="7" height="4" viewBox="0 0 7 4"><path d="M0 0H7 L3.5 4 Z" fill="#8c8c8c"/></svg>
<div style="left:1830px;top:322px;width:42.5px;height:17.5px;background:#7b7b7b;border:1px solid #2b2b2b;box-shadow:inset 0 1px 0 rgba(0,0,0,.12);"></div>
<span style="font-size:11px;line-height:14px;color:#959595;white-space:nowrap;left:1834px;top:323.45px;-webkit-text-stroke:.2px #959595;">100%</span>
<svg style="left:1887px;top:322px;" width="16" height="16" viewBox="0 0 16 16"><rect x="5.300" y="1" width="5.400" height="7" rx="2.700" fill="none" stroke="#787878" stroke-width="1.600"/><rect x="5.300" y="8" width="5.400" height="7" rx="2.700" fill="none" stroke="#787878" stroke-width="1.600"/><path d="M0 8h3.400M12.600 8H16M1 4l2.600 1.600M15 4l-2.600 1.600M1 12l2.600-1.600M15 12l-2.600-1.600" stroke="#787878" stroke-width="1"/></svg>
<span style="font-size:11px;line-height:14px;color:#9a9a9a;white-space:nowrap;-webkit-text-stroke:.22px #9a9a9a;letter-spacing:-0.09px;left:1681.91px;top:353.3px;">Ausrichten:</span>
<div style="left:1741.5px;top:351px;width:46.4px;height:18.5px;background:#555555;border:1px solid #2f2f2f;"></div>
<div style="left:1764.2px;top:352px;width:1px;height:16.5px;background:#2f2f2f;"></div>
<svg style="left:1746px;top:355px;" width="15" height="10" viewBox="0 0 15 10"><path d="M0 2h9M3 7h8M15 7l-4-2.800v5.600z" stroke="#8a8a8a" stroke-width="1.200" fill="#8a8a8a"/></svg>
<svg style="left:1769px;top:355px;" width="15" height="10" viewBox="0 0 15 10"><path d="M0 2h14M3 7h6M13 7l-4-2.800v5.600z" stroke="#8a8a8a" stroke-width="1.200" fill="#8a8a8a"/></svg>
<div style="left:1676px;top:377px;width:232px;height:1px;background:#383838;"></div>
<div style="left:1676px;top:378px;width:232px;height:1px;background:#525252;"></div>
<span style="font-size:11px;line-height:14px;color:#9a9a9a;white-space:nowrap;-webkit-text-stroke:.22px #9a9a9a;letter-spacing:-0.16px;left:1708.84px;top:387.8px;">Profil:</span>
<div style="left:1741.5px;top:385.5px;width:96px;height:18px;background:#7b7b7b;border:1px solid #2b2b2b;box-shadow:inset 0 1px 0 rgba(0,0,0,.12);"></div>
<div style="left:1837px;top:385.5px;width:15.5px;height:18px;background:#525252;border:1px solid #2b2b2b;"></div>
<svg style="left:1841px;top:393px;" width="7" height="4" viewBox="0 0 7 4"><path d="M0 0H7 L3.5 4 Z" fill="#8a8a8a"/></svg>
<svg style="left:1864px;top:388px;" width="13" height="13" viewBox="0 0 13 13"><path d="M6.500 0v13" stroke="#777" stroke-width="1" stroke-dasharray="1.500 1.500"/><path d="M0 1.500l5.500 5L0 11.500zM13 1.500l-5.500 5 5.500 5z" fill="#707070"/></svg>
<svg style="left:1888px;top:387px;" width="13" height="15" viewBox="0 0 13 15"><path d="M0 7.500h13" stroke="#777" stroke-width="1" stroke-dasharray="1.500 1.500"/><path d="M2 0h9L6.500 5.500zM2 15h9L6.500 9.500z" fill="#707070"/></svg>
<div style="left:1672px;top:415px;width:246.5px;height:16.5px;background:linear-gradient(#2b2b2b,#343434);"></div>
<div style="left:1672px;top:431.5px;width:246.5px;height:190.5px;background:#494949;border-top:1px solid #565656;"></div>
<div style="left:1672px;top:415px;width:66.5px;height:17.5px;background:#494949;border-top:1px solid #5c5c5c;border-right:1px solid #2a2a2a;"></div>
<span style="font-size:11px;line-height:14px;color:#f2f2f2;white-space:nowrap;font-weight:700;letter-spacing:-0.13px;left:1679.5px;top:416.2px;">Farbfelder</span>
<div style="left:1804px;top:416px;width:1px;height:15.5px;background:#242424;"></div>
<div style="left:1805px;top:416px;width:1px;height:15.5px;background:#3e3e3e;"></div>
<span style="font-size:11px;line-height:14px;color:#b2b2b2;white-space:nowrap;font-weight:700;letter-spacing:-0.07px;left:1745px;top:416.2px;">Grafikstile</span>
<svg style="left:1900px;top:420px;" width="15" height="8" viewBox="0 0 15 8"><path d="M0 1.500h5l-2.500 2.800z" fill="#e2e2e2"/><path d="M6.500 .5h8.500M6.500 2.500h8.500M6.500 4.500h8.500M6.500 6.500h8.500" stroke="#e2e2e2" stroke-width="1"/></svg>
<div style="left:1687.5px;top:448.5px;width:19px;height:18.5px;background:#fff;"></div>
<div style="left:1694.5px;top:455px;width:5px;height:5.5px;background:#494949;"></div>
<svg style="left:1688px;top:448px;" width="19" height="18.5" viewBox="0 0 19 18.5"><path d="M.5 18L18.500 .5" stroke="#e0182a" stroke-width="2.200"/></svg>
<div style="left:1677.5px;top:439px;width:19px;height:18.5px;background:#fcca83;border:1px solid #f6f6f6;"></div>
<div style="left:1862.5px;top:439.5px;width:50px;height:21px;background:#383838;border:1px solid #2a2a2a;"></div>
<div style="left:1863.5px;top:440.5px;width:23.5px;height:19px;background:#5b5b5b;"></div>
<svg style="left:1868px;top:444px;" width="14" height="12" viewBox="0 0 14 12"><path d="M0 1.200h14M0 4.400h14M0 7.600h14M0 10.800h14" stroke="#e4e4e4" stroke-width="1.700"/></svg>
<svg style="left:1893px;top:444px;" width="13" height="12" viewBox="0 0 13 12"><rect x="0" y="0" width="3.400" height="3.100" fill="#e0e0e0"/><rect x="0" y="4.4" width="3.400" height="3.100" fill="#e0e0e0"/><rect x="0" y="8.8" width="3.400" height="3.100" fill="#e0e0e0"/><rect x="4.7" y="0" width="3.400" height="3.100" fill="#e0e0e0"/><rect x="4.7" y="4.4" width="3.400" height="3.100" fill="#e0e0e0"/><rect x="4.7" y="8.8" width="3.400" height="3.100" fill="#e0e0e0"/><rect x="9.4" y="0" width="3.400" height="3.100" fill="#e0e0e0"/><rect x="9.4" y="4.4" width="3.400" height="3.100" fill="#e0e0e0"/><rect x="9.4" y="8.8" width="3.400" height="3.100" fill="#e0e0e0"/></svg>
<div style="left:1677px;top:473px;width:236.5px;height:129.5px;background:#494949;border:1px solid #2f2f2f;"></div>
<div style="left:1901.5px;top:474px;width:11px;height:127.5px;background:#3a3a3a;border-left:1px solid #323232;"></div>
<svg style="left:1904px;top:479px;" width="7" height="4.5" viewBox="0 0 7 4.5"><path d="M0 4.5 H7 L3.5 0 Z" fill="#8a8a8a"/></svg>
<svg style="left:1904px;top:593px;" width="7" height="4.5" viewBox="0 0 7 4.5"><path d="M0 0H7 L3.5 4.5 Z" fill="#8a8a8a"/></svg>
<div style="left:1678.2px;top:474.3px;width:12.8px;height:12.8px;background:#fff;"></div>
<svg style="left:1678px;top:474px;" width="12.8" height="12.8" viewBox="0 0 12.8 12.8"><path d="M0 12.800L12.800 0" stroke="#e0182a" stroke-width="1.800"/></svg>
<div style="left:1691.6px;top:474.3px;width:13.2px;height:12.8px;background:#fff;"></div>
<svg style="left:1692px;top:474px;" width="13.2" height="12.8" viewBox="0 0 13.2 12.8"><circle cx="6.600" cy="6.400" r="4" fill="none" stroke="#111" stroke-width="1"/><circle cx="6.600" cy="6.400" r="1.600" fill="none" stroke="#111" stroke-width="1"/><path d="M6.600 0v4M6.600 8.800v4M0 6.400h4M9.200 6.400h4" stroke="#111" stroke-width="1"/></svg>
<svg style="left:1681px;top:606px;" width="14" height="12" viewBox="0 0 14 12"><path d="M1 1v9M3.500 1v9" stroke="#d8d8d8" stroke-width="1.600"/><path d="M6 1.500l3.500 8.500" stroke="#d8d8d8" stroke-width="1.800"/><path d="M9 9.500h5l-2.500 2.500z" fill="#d8d8d8"/></svg>
<svg style="left:1710px;top:606px;" width="11" height="12" viewBox="0 0 11 12"><path d="M9 2L3.500 6 9 10" fill="none" stroke="#d8d8d8" stroke-width="1.300"/><circle cx="9" cy="2" r="1.700" fill="#d8d8d8"/><circle cx="9" cy="10" r="1.700" fill="#d8d8d8"/><circle cx="3.500" cy="6" r="2.600" fill="none" stroke="#d8d8d8" stroke-width="1.200"/></svg>
<svg style="left:1774px;top:607px;" width="11" height="10" viewBox="0 0 11 10"><rect x=".5" y=".5" width="10" height="9" fill="#e2e2e2" stroke="#e2e2e2"/><path d="M4 0v10M7.500 0v10M0 3.300h11M0 6.700h11" stroke="#494949" stroke-width=".9"/><rect x="7.800" y="3.700" width="2.500" height="2.600" fill="#222"/><rect x=".8" y="7" width="2.800" height="2.500" fill="#222"/></svg>
<svg style="left:1786px;top:615px;" width="5" height="3" viewBox="0 0 5 3"><path d="M0 0h5L2.500 3z" fill="#d8d8d8"/></svg>
<svg style="left:1802px;top:606px;" width="11" height="11" viewBox="0 0 11 11"><rect x=".5" y=".5" width="10" height="10" fill="none" stroke="#606060"/><path d="M3.500 .5v10M.5 3.500h10M.5 6h10M.5 8.500h10" stroke="#606060" stroke-width=".9"/></svg>
<svg style="left:1828px;top:606px;" width="13" height="11" viewBox="0 0 13 11"><path d="M0 2V.5h5l1.200 1.500z" fill="#d8d8d8"/><rect x="0" y="2" width="13" height="9" fill="#d2d2d2"/></svg>
<svg style="left:1854px;top:606px;" width="11" height="11" viewBox="0 0 11 11"><path d="M1 1h9.500v9.500H4.500V4.500H1z" fill="#dedede"/><path d="M.5 6.500l3 3h-3z" fill="#dedede"/></svg>
<svg style="left:1880px;top:606px;" width="12" height="13" viewBox="0 0 12 13"><path d="M0 3h12M4 3V1h4v2" stroke="#616161" stroke-width="1.200" fill="none"/><path d="M1.500 4.500h9L9.800 12.500H2.200z" fill="none" stroke="#616161" stroke-width="1.200"/><path d="M4.300 5.500v6M6 5.500v6M7.700 5.500v6" stroke="#616161" stroke-width=".9"/></svg>
<svg style="left:1908px;top:611px;" width="10" height="10" viewBox="0 0 10 10"><rect x="0" y="8" width="1" height="1" fill="#1f1f1f"/><rect x="2" y="6" width="1" height="1" fill="#1f1f1f"/><rect x="2" y="8" width="1" height="1" fill="#1f1f1f"/><rect x="4" y="4" width="1" height="1" fill="#1f1f1f"/><rect x="4" y="6" width="1" height="1" fill="#1f1f1f"/><rect x="4" y="8" width="1" height="1" fill="#1f1f1f"/><rect x="6" y="2" width="1" height="1" fill="#1f1f1f"/><rect x="6" y="4" width="1" height="1" fill="#1f1f1f"/><rect x="6" y="6" width="1" height="1" fill="#1f1f1f"/><rect x="6" y="8" width="1" height="1" fill="#1f1f1f"/><rect x="8" y="0" width="1" height="1" fill="#1f1f1f"/><rect x="8" y="2" width="1" height="1" fill="#1f1f1f"/><rect x="8" y="4" width="1" height="1" fill="#1f1f1f"/><rect x="8" y="6" width="1" height="1" fill="#1f1f1f"/><rect x="8" y="8" width="1" height="1" fill="#1f1f1f"/></svg>
<div style="left:1672px;top:625px;width:246.5px;height:16.5px;background:linear-gradient(#2b2b2b,#343434);"></div>
<div style="left:1672px;top:641.5px;width:246.5px;height:225.5px;background:#494949;border-top:1px solid #565656;"></div>
<div style="left:1672px;top:625px;width:48.5px;height:17.5px;background:#494949;border-top:1px solid #5c5c5c;border-right:1px solid #2a2a2a;"></div>
<svg style="left:1676px;top:630px;" width="6" height="9" viewBox="0 0 6 9"><path d="M.8 3.200L3 1l2.200 2.200M.8 5.800L3 8l2.200-2.200" fill="none" stroke="#e6e6e6" stroke-width="1.100"/></svg>
<span style="font-size:11px;line-height:14px;color:#f2f2f2;white-space:nowrap;font-weight:700;letter-spacing:-0.39px;left:1685.5px;top:626.2px;">Farbe</span>
<div style="left:1797px;top:626px;width:1px;height:15.5px;background:#242424;"></div>
<div style="left:1798px;top:626px;width:1px;height:15.5px;background:#3e3e3e;"></div>
<span style="font-size:11px;line-height:14px;color:#b2b2b2;white-space:nowrap;font-weight:700;letter-spacing:0.02px;left:1727px;top:626.2px;">Transparenz</span>
<div style="left:1848px;top:626px;width:1px;height:15.5px;background:#242424;"></div>
<div style="left:1849px;top:626px;width:1px;height:15.5px;background:#3e3e3e;"></div>
<span style="font-size:11px;line-height:14px;color:#b2b2b2;white-space:nowrap;font-weight:700;letter-spacing:0.04px;left:1806px;top:626.2px;">Verlauf</span>
<svg style="left:1900px;top:630px;" width="15" height="8" viewBox="0 0 15 8"><path d="M0 1.500h5l-2.500 2.800z" fill="#e2e2e2"/><path d="M6.500 .5h8.500M6.500 2.500h8.500M6.500 4.500h8.500M6.500 6.500h8.500" stroke="#e2e2e2" stroke-width="1"/></svg>
<svg style="left:1677px;top:650px;" width="12" height="12" viewBox="0 0 12 12"><rect x="4.500" y="4.500" width="7" height="7" fill="#494949" stroke="#e0e0e0" stroke-width="1"/><rect x="6.500" y="6.500" width="3" height="3" fill="#111"/><rect x=".5" y=".5" width="7" height="7" fill="#e6e6e6" stroke="#222" stroke-width="1"/></svg>
<svg style="left:1697px;top:650px;" width="11" height="11" viewBox="0 0 11 11"><path d="M2.500 4V2.500h5V8" fill="none" stroke="#dcdcdc" stroke-width="1.300"/><path d="M0 4h5L2.500 1zM5 7.500h5L7.500 10.500z" fill="#dcdcdc"/></svg>
<div style="left:1687.8px;top:676.5px;width:18.7px;height:18.5px;background:#fff;"></div>
<div style="left:1694.8px;top:683px;width:5px;height:5.5px;background:#494949;"></div>
<svg style="left:1688px;top:676px;" width="18.7" height="18.5" viewBox="0 0 18.7 18.5"><path d="M.5 18L18.200 .5" stroke="#e0182a" stroke-width="2.200"/></svg>
<div style="left:1677.5px;top:666.5px;width:19px;height:18.7px;background:#fcca83;border:1px solid #f6f6f6;"></div>
<svg style="left:1682px;top:710px;" width="12" height="13" viewBox="0 0 12 13"><path d="M6 .8l5 2.700v6L6 12.200 1 9.500v-6z" fill="#5c5c5c" stroke="#bcbcbc" stroke-width="1"/><path d="M1 3.500l5 2.700 5-2.700M6 6.200v6" fill="none" stroke="#bcbcbc" stroke-width="1"/></svg>
<div style="left:1701.5px;top:709.5px;width:14px;height:14px;background:#fcca83;border:1px solid #f4f4f4;"></div>
<span style="font-size:11px;line-height:14px;color:#dcdcdc;white-space:nowrap;font-weight:700;left:1724.03px;top:654.3px;">C</span>
<div style="left:1742.5px;top:657.5px;width:112.5px;height:5.2px;background:linear-gradient(90deg,#fcca83 0%,#e6c888 30%,#9cbc8c 60%,#30a48c 85%,#009488 100%);box-shadow:0 0 0 .5px #333;"></div>
<svg style="left:1738px;top:663px;" width="9" height="6.5" viewBox="0 0 9 6.5"><path d="M4.500 0L9 4.500V6.500H0V4.500z" fill="#c4c4c4" stroke="#3a3a3a" stroke-width=".6"/></svg>
<div style="left:1861.5px;top:651.5px;width:33px;height:18px;background:#a4a4a4;border:1px solid #2b2b2b;box-shadow:inset 0 1px 0 rgba(0,0,0,.12);"></div>
<span style="font-size:11px;line-height:14px;color:#0c0c0c;white-space:nowrap;left:1866px;top:653.2px;-webkit-text-stroke:.2px #0c0c0c;">0</span>
<span style="font-size:11px;line-height:14px;color:#dcdcdc;white-space:nowrap;font-weight:700;left:1897px;top:654.5px;">%</span>
<span style="font-size:11px;line-height:14px;color:#dcdcdc;white-space:nowrap;font-weight:700;left:1723.42px;top:679.3px;">M</span>
<div style="left:1742.5px;top:682.5px;width:112.5px;height:5.2px;background:linear-gradient(90deg,#ffee86 0%,#fcc07e 35%,#f48a74 65%,#e9395c 90%,#e5204f 100%);box-shadow:0 0 0 .5px #333;"></div>
<svg style="left:1765px;top:688px;" width="9" height="6.5" viewBox="0 0 9 6.5"><path d="M4.500 0L9 4.500V6.500H0V4.500z" fill="#c4c4c4" stroke="#3a3a3a" stroke-width=".6"/></svg>
<div style="left:1861.5px;top:676.5px;width:33px;height:18px;background:#a4a4a4;border:1px solid #2b2b2b;box-shadow:inset 0 1px 0 rgba(0,0,0,.12);"></div>
<span style="font-size:11px;line-height:14px;color:#0c0c0c;white-space:nowrap;left:1866px;top:678.2px;-webkit-text-stroke:.2px #0c0c0c;">24</span>
<span style="font-size:11px;line-height:14px;color:#dcdcdc;white-space:nowrap;font-weight:700;left:1897px;top:679.5px;">%</span>
<span style="font-size:11px;line-height:14px;color:#dcdcdc;white-space:nowrap;font-weight:700;left:1724.33px;top:704.3px;">Y</span>
<div style="left:1742.5px;top:707.5px;width:112.5px;height:5.2px;background:linear-gradient(90deg,#f7d2ea 0%,#f9cdb8 35%,#fcc884 60%,#fdc544 85%,#ffc20e 100%);box-shadow:0 0 0 .5px #333;"></div>
<svg style="left:1803px;top:713px;" width="9" height="6.5" viewBox="0 0 9 6.5"><path d="M4.500 0L9 4.500V6.500H0V4.500z" fill="#c4c4c4" stroke="#3a3a3a" stroke-width=".6"/></svg>
<div style="left:1861.5px;top:701.5px;width:33px;height:18px;background:#a4a4a4;border:1px solid #2b2b2b;box-shadow:inset 0 1px 0 rgba(0,0,0,.12);"></div>
<span style="font-size:11px;line-height:14px;color:#0c0c0c;white-space:nowrap;left:1866px;top:703.2px;-webkit-text-stroke:.2px #0c0c0c;">58</span>
<span style="font-size:11px;line-height:14px;color:#dcdcdc;white-space:nowrap;font-weight:700;left:1897px;top:704.5px;">%</span>
<span style="font-size:11px;line-height:14px;color:#dcdcdc;white-space:nowrap;font-weight:700;left:1724.03px;top:729.3px;">K</span>
<div style="left:1742.5px;top:732.5px;width:112.5px;height:5.2px;background:linear-gradient(90deg,#fcca83 0%,#c49c68 35%,#86683f 65%,#3f2f18 90%,#2a1f10 100%);box-shadow:0 0 0 .5px #333;"></div>
<svg style="left:1738px;top:738px;" width="9" height="6.5" viewBox="0 0 9 6.5"><path d="M4.500 0L9 4.500V6.500H0V4.500z" fill="#c4c4c4" stroke="#3a3a3a" stroke-width=".6"/></svg>
<div style="left:1861.5px;top:726.5px;width:33px;height:18px;background:#a4a4a4;border:1px solid #2b2b2b;box-shadow:inset 0 1px 0 rgba(0,0,0,.12);"></div>
<span style="font-size:11px;line-height:14px;color:#0c0c0c;white-space:nowrap;left:1866px;top:728.2px;-webkit-text-stroke:.2px #0c0c0c;">0</span>
<span style="font-size:11px;line-height:14px;color:#dcdcdc;white-space:nowrap;font-weight:700;left:1897px;top:729.5px;">%</span>
<div style="left:1677.3px;top:756.7px;width:13px;height:12.6px;background:#fff;"></div>
<svg style="left:1677px;top:757px;" width="13" height="12.6" viewBox="0 0 13 12.6"><path d="M0 12.600L13 0" stroke="#e0182a" stroke-width="1.900"/></svg>
<div style="left:1690.3px;top:756.7px;width:13.2px;height:12.6px;background:#000;"></div>
<div style="left:1703.5px;top:756.7px;width:13px;height:12.6px;background:#fff;"></div>
<div style="left:1678.8px;top:780.8px;width:222.8px;height:78.4px;background:linear-gradient(90deg,#ee1c25 0%,#f7811f 8%,#fff200 17%,#a6ce39 27%,#5bb531 36%,#17a34a 45%,#00a99d 51%,#27bdf0 55.500%,#1b75bc 61%,#22409a 69%,#3f3a97 76%,#8a3b97 84%,#d4208a 92%,#ed145b 97%,#ee1c25 100%);"></div>
<div style="left:1678.8px;top:780.8px;width:222.8px;height:78.4px;background:linear-gradient(180deg,#fff 0%,rgba(255,255,255,.92) 5%,rgba(255,255,255,.45) 22%,rgba(255,255,255,0) 42%,rgba(0,0,0,0) 56%,rgba(0,0,0,.45) 76%,rgba(0,0,0,.85) 92%,#000 100%);"></div>
<div style="left:1672px;top:869px;width:246.5px;height:16.5px;background:linear-gradient(#2b2b2b,#343434);"></div>
<div style="left:1672px;top:885.5px;width:246.5px;height:90px;background:#494949;border-top:1px solid #565656;"></div>
<div style="left:1720.5px;top:870px;width:1px;height:15.5px;background:#242424;"></div>
<div style="left:1721.5px;top:870px;width:1px;height:15.5px;background:#3e3e3e;"></div>
<span style="font-size:11px;line-height:14px;color:#b2b2b2;white-space:nowrap;font-weight:700;letter-spacing:-0.18px;left:1679px;top:870.2px;">Absatz</span>
<div style="left:1721.5px;top:869px;width:66px;height:17.5px;background:#494949;border-top:1px solid #5c5c5c;border-right:1px solid #2a2a2a;border-left:1px solid #2a2a2a;"></div>
<span style="font-size:11px;line-height:14px;color:#f2f2f2;white-space:nowrap;font-weight:700;letter-spacing:-0.12px;left:1728px;top:870.2px;">OpenType</span>
<svg style="left:1900px;top:874px;" width="15" height="8" viewBox="0 0 15 8"><path d="M0 1.500h5l-2.500 2.800z" fill="#e2e2e2"/><path d="M6.500 .5h8.500M6.500 2.500h8.500M6.500 4.500h8.500M6.500 6.500h8.500" stroke="#e2e2e2" stroke-width="1"/></svg>
<span style="font-size:11px;line-height:14px;color:#eaeaea;white-space:nowrap;-webkit-text-stroke:.22px #eaeaea;letter-spacing:-0.19px;left:1694.81px;top:895.5px;">Zahl:</span>
<div style="left:1724px;top:893.5px;width:181.5px;height:18px;background:linear-gradient(#5c5c5c,#4c4c4c);border:1px solid #2a2a2a;box-shadow:inset 0 1px 0 #6a6a6a;"></div>
<div style="left:1887px;top:895.5px;width:1px;height:14px;background:#3a3a3a;"></div>
<span style="font-size:11px;line-height:14px;color:#f0f0f0;white-space:nowrap;-webkit-text-stroke:.22px #f0f0f0;letter-spacing:-0.15px;left:1730px;top:895.5px;">Standardzahl</span>
<svg style="left:1892px;top:901px;" width="8" height="4.5" viewBox="0 0 8 4.5"><path d="M0 0H8 L4 4.5 Z" fill="#ececec"/></svg>
<span style="font-size:11px;line-height:14px;color:#eaeaea;white-space:nowrap;-webkit-text-stroke:.22px #eaeaea;letter-spacing:-0.08px;left:1676.92px;top:921.5px;">Position:</span>
<div style="left:1724px;top:919.5px;width:181.5px;height:18px;background:linear-gradient(#5c5c5c,#4c4c4c);border:1px solid #2a2a2a;box-shadow:inset 0 1px 0 #6a6a6a;"></div>
<div style="left:1887px;top:921.5px;width:1px;height:14px;background:#3a3a3a;"></div>
<span style="font-size:11px;line-height:14px;color:#f0f0f0;white-space:nowrap;-webkit-text-stroke:.22px #f0f0f0;letter-spacing:-0.04px;left:1730px;top:921.5px;">Standardposition</span>
<svg style="left:1892px;top:927px;" width="8" height="4.5" viewBox="0 0 8 4.5"><path d="M0 0H8 L4 4.5 Z" fill="#ececec"/></svg>
<div style="left:1689.5px;top:945.5px;width:23px;height:22.5px;background:#343434;border:1px solid #2a2a2a;"></div>
<span style="font-size:17px;line-height:18px;color:#ececec;white-space:nowrap;font-family:'Liberation Serif',serif;left:1695.81px;top:947.5px;">fi</span>
<span style="font-size:15px;line-height:18px;color:#6c6c6c;white-space:nowrap;font-family:'Liberation Serif',serif;font-style:italic;left:1721.17px;top:948px;">&</span>
<span style="font-size:15px;line-height:18px;color:#6c6c6c;white-space:nowrap;font-family:'Liberation Serif',serif;font-style:italic;left:1747px;top:948px;">st</span>
<span style="font-size:15px;line-height:18px;color:#6c6c6c;white-space:nowrap;font-family:'Liberation Serif',serif;font-style:italic;left:1773.42px;top:948px;">A</span>
<span style="font-size:15px;line-height:18px;color:#e6e6e6;white-space:nowrap;font-family:'Liberation Serif',serif;left:1798.34px;top:949px;">aa</span>
<svg style="left:1797px;top:949px;" width="17" height="5" viewBox="0 0 17 5"><path d="M0 2.500h14" stroke="#e6e6e6" stroke-width="1.100"/><path d="M17 2.500l-4.500-2v4z" fill="#e6e6e6"/></svg>
<span style="font-size:16px;line-height:18px;color:#6c6c6c;white-space:nowrap;font-family:'Liberation Serif',serif;font-style:italic;left:1824.55px;top:948px;">T</span>
<span style="font-size:17px;line-height:18px;color:#e6e6e6;white-space:nowrap;font-family:'Liberation Serif',serif;left:1847.75px;top:948px;">1</span>
<span style="font-size:10px;line-height:12px;color:#e6e6e6;white-space:nowrap;-webkit-text-stroke:.22px #e6e6e6;font-family:'Liberation Serif',serif;left:1857.67px;top:946px;">st</span>
<span style="font-size:17px;line-height:18px;color:#e6e6e6;white-space:nowrap;font-family:'Liberation Serif',serif;left:1875.62px;top:948px;">½</span>
<div style="left:1918.5px;top:67px;width:1.5px;height:911px;background:#262626;"></div>
<div style="left:997px;top:224px;width:279.5px;height:362px;background:#494949;border:1px solid #2b2b2b;border-radius:3px 3px 0 0;box-shadow:0 2px 6px rgba(0,0,0,.35);"></div>
<div style="left:998px;top:225px;width:277.5px;height:12.5px;background:linear-gradient(#2c2c2c,#343434);border-radius:2px 2px 0 0;"></div>
<svg style="left:1004px;top:229px;" width="5" height="5" viewBox="0 0 5 5"><path d="M0 0L5 5M5 0L0 5" stroke="#dedede" stroke-width="1.200"/></svg>
<svg style="left:1264px;top:228px;" width="8" height="6" viewBox="0 0 8 6"><path d="M3.500 0v6L0 3zM8 0v6L4.500 3z" fill="#d4d4d4"/></svg>
<div style="left:998px;top:237.5px;width:277.5px;height:17.5px;background:linear-gradient(#2d2d2d,#333);"></div>
<div style="left:998px;top:254.5px;width:277.5px;height:1px;background:#2a2a2a;"></div>
<div style="left:998px;top:237.5px;width:64px;height:18px;background:#494949;border-right:1px solid #2a2a2a;border-top:1px solid #5a5a5a;"></div>
<span style="font-size:11px;line-height:14px;color:#f0f0f0;white-space:nowrap;font-weight:700;letter-spacing:-0.22px;left:1005px;top:239.3px;">Erdfarben</span>
<svg style="left:1258px;top:242px;" width="15" height="8" viewBox="0 0 15 8"><path d="M0 1.500h5l-2.500 2.800z" fill="#e2e2e2"/><path d="M6.500 .5h8.500M6.500 2.500h8.500M6.500 4.500h8.500M6.500 6.500h8.500" stroke="#e2e2e2" stroke-width="1"/></svg>
<div style="left:1004.5px;top:262.5px;width:265px;height:18px;background:#a4a4a4;border:1px solid #2c2c2c;box-shadow:inset 0 1px 1px rgba(0,0,0,.2);"></div>
<svg style="left:1007px;top:265px;" width="13" height="13" viewBox="0 0 13 13"><circle cx="7.800" cy="5" r="3.500" fill="none" stroke="#222" stroke-width="1.300"/><path d="M5.200 7.600L1 12" stroke="#222" stroke-width="1.800"/></svg>
<div style="left:1003.5px;top:287.5px;width:267.5px;height:271px;background:#4c4c4c;border:1px solid #2e2e2e;"></div>
<div style="left:1258.5px;top:288.5px;width:11.5px;height:269px;background:#3a3a3a;border-left:1px solid #333;"></div>
<svg style="left:1261px;top:293px;" width="7" height="4.5" viewBox="0 0 7 4.5"><path d="M0 4.5 H7 L3.5 0 Z" fill="#bdbdbd"/></svg>
<svg style="left:1261px;top:549px;" width="7" height="4.5" viewBox="0 0 7 4.5"><path d="M0 0H7 L3.5 4.5 Z" fill="#bdbdbd"/></svg>
<svg style="left:1005px;top:290px;" width="12" height="11" viewBox="0 0 12 11"><path d="M0 2.500V1h4.500l1 1.500z" fill="#d8d8d8"/><rect x="0" y="2.500" width="12" height="8.500" fill="#c9c9c9"/><rect x="0" y="2.500" width="12" height="1.200" fill="#ececec"/></svg>
<div style="left:1017.7px;top:288.3px;width:13.5px;height:13.5px;background:#8a2d14;"></div>
<div style="left:1031.7px;top:288.3px;width:13.5px;height:13.5px;background:#70490e;"></div>
<div style="left:1045.7px;top:288.3px;width:13.5px;height:13.5px;background:#a86a1c;"></div>
<div style="left:1059.7px;top:288.3px;width:13.5px;height:13.5px;background:#8f8343;"></div>
<div style="left:1004.5px;top:302.8px;width:69px;height:1px;background:#3c3c3c;"></div>
<svg style="left:1005px;top:306px;" width="12" height="11" viewBox="0 0 12 11"><path d="M0 2.500V1h4.500l1 1.500z" fill="#d8d8d8"/><rect x="0" y="2.500" width="12" height="8.500" fill="#c9c9c9"/><rect x="0" y="2.500" width="12" height="1.200" fill="#ececec"/></svg>
<div style="left:1017.7px;top:304.3px;width:13.5px;height:13.5px;background:#8c6a1e;"></div>
<div style="left:1031.7px;top:304.3px;width:13.5px;height:13.5px;background:#b09a55;"></div>
<div style="left:1045.7px;top:304.3px;width:13.5px;height:13.5px;background:#dcc373;"></div>
<div style="left:1059.7px;top:304.3px;width:13.5px;height:13.5px;background:#8c8a48;"></div>
<div style="left:1004.5px;top:318.8px;width:69px;height:1px;background:#3c3c3c;"></div>
<svg style="left:1005px;top:322px;" width="12" height="11" viewBox="0 0 12 11"><path d="M0 2.500V1h4.500l1 1.500z" fill="#d8d8d8"/><rect x="0" y="2.500" width="12" height="8.500" fill="#c9c9c9"/><rect x="0" y="2.500" width="12" height="1.200" fill="#ececec"/></svg>
<div style="left:1017.7px;top:320.3px;width:13.5px;height:13.5px;background:#8a2a12;"></div>
<div style="left:1031.7px;top:320.3px;width:13.5px;height:13.5px;background:#c8623c;"></div>
<div style="left:1045.7px;top:320.3px;width:13.5px;height:13.5px;background:#6f8a9d;"></div>
<div style="left:1059.7px;top:320.3px;width:13.5px;height:13.5px;background:#84505a;"></div>
<div style="left:1004.5px;top:334.8px;width:69px;height:1px;background:#3c3c3c;"></div>
<svg style="left:1005px;top:338px;" width="12" height="11" viewBox="0 0 12 11"><path d="M0 2.500V1h4.500l1 1.500z" fill="#d8d8d8"/><rect x="0" y="2.500" width="12" height="8.500" fill="#c9c9c9"/><rect x="0" y="2.500" width="12" height="1.200" fill="#ececec"/></svg>
<div style="left:1017.7px;top:336.3px;width:13.5px;height:13.5px;background:#e0bb6e;"></div>
<div style="left:1031.7px;top:336.3px;width:13.5px;height:13.5px;background:#949a55;"></div>
<div style="left:1045.7px;top:336.3px;width:13.5px;height:13.5px;background:#65455a;"></div>
<div style="left:1059.7px;top:336.3px;width:13.5px;height:13.5px;background:#8e6a78;"></div>
<div style="left:1004.5px;top:350.8px;width:69px;height:1px;background:#3c3c3c;"></div>
<svg style="left:1005px;top:354px;" width="12" height="11" viewBox="0 0 12 11"><path d="M0 2.500V1h4.500l1 1.500z" fill="#d8d8d8"/><rect x="0" y="2.500" width="12" height="8.500" fill="#c9c9c9"/><rect x="0" y="2.500" width="12" height="1.200" fill="#ececec"/></svg>
<div style="left:1017.7px;top:352.3px;width:13.5px;height:13.5px;background:#3e6878;"></div>
<div style="left:1031.7px;top:352.3px;width:13.5px;height:13.5px;background:#1e3a4c;"></div>
<div style="left:1045.7px;top:352.3px;width:13.5px;height:13.5px;background:#6a8ca0;"></div>
<div style="left:1059.7px;top:352.3px;width:13.5px;height:13.5px;background:#94b0c0;"></div>
<div style="left:1004.5px;top:366.8px;width:69px;height:1px;background:#3c3c3c;"></div>
<svg style="left:1005px;top:370px;" width="12" height="11" viewBox="0 0 12 11"><path d="M0 2.500V1h4.500l1 1.500z" fill="#d8d8d8"/><rect x="0" y="2.500" width="12" height="8.500" fill="#c9c9c9"/><rect x="0" y="2.500" width="12" height="1.200" fill="#ececec"/></svg>
<div style="left:1017.7px;top:368.3px;width:13.5px;height:13.5px;background:#b8281a;"></div>
<div style="left:1031.7px;top:368.3px;width:13.5px;height:13.5px;background:#cc623c;"></div>
<div style="left:1045.7px;top:368.3px;width:13.5px;height:13.5px;background:#6c4c10;"></div>
<div style="left:1059.7px;top:368.3px;width:13.5px;height:13.5px;background:#dfba70;"></div>
<div style="left:1004.5px;top:382.8px;width:69px;height:1px;background:#3c3c3c;"></div>
<svg style="left:1005px;top:386px;" width="12" height="11" viewBox="0 0 12 11"><path d="M0 2.500V1h4.500l1 1.500z" fill="#d8d8d8"/><rect x="0" y="2.500" width="12" height="8.500" fill="#c9c9c9"/><rect x="0" y="2.500" width="12" height="1.200" fill="#ececec"/></svg>
<div style="left:1017.7px;top:384.3px;width:13.5px;height:13.5px;background:#c0b898;"></div>
<div style="left:1031.7px;top:384.3px;width:13.5px;height:13.5px;background:#e8e4d2;"></div>
<div style="left:1045.7px;top:384.3px;width:13.5px;height:13.5px;background:#8e8e7c;"></div>
<div style="left:1059.7px;top:384.3px;width:13.5px;height:13.5px;background:#dcdcd8;"></div>
<div style="left:1004.5px;top:398.8px;width:69px;height:1px;background:#3c3c3c;"></div>
<svg style="left:1005px;top:402px;" width="12" height="11" viewBox="0 0 12 11"><path d="M0 2.500V1h4.500l1 1.500z" fill="#d8d8d8"/><rect x="0" y="2.500" width="12" height="8.500" fill="#c9c9c9"/><rect x="0" y="2.500" width="12" height="1.200" fill="#ececec"/></svg>
<div style="left:1017.7px;top:400.3px;width:13.5px;height:13.5px;background:#c8845a;"></div>
<div style="left:1031.7px;top:400.3px;width:13.5px;height:13.5px;background:#fcca83;"></div>
<div style="left:1045.7px;top:400.3px;width:13.5px;height:13.5px;background:#c08a18;"></div>
<div style="left:1059.7px;top:400.3px;width:13.5px;height:13.5px;background:#a09030;"></div>
<div style="left:1004.5px;top:414.8px;width:69px;height:1px;background:#3c3c3c;"></div>
<svg style="left:1005px;top:418px;" width="12" height="11" viewBox="0 0 12 11"><path d="M0 2.500V1h4.500l1 1.500z" fill="#d8d8d8"/><rect x="0" y="2.500" width="12" height="8.500" fill="#c9c9c9"/><rect x="0" y="2.500" width="12" height="1.200" fill="#ececec"/></svg>
<div style="left:1017.7px;top:416.3px;width:13.5px;height:13.5px;background:#dfbe6c;"></div>
<div style="left:1031.7px;top:416.3px;width:13.5px;height:13.5px;background:#744a50;"></div>
<div style="left:1045.7px;top:416.3px;width:13.5px;height:13.5px;background:#8a8672;"></div>
<div style="left:1059.7px;top:416.3px;width:13.5px;height:13.5px;background:#6a4c14;"></div>
<div style="left:1073.7px;top:416.3px;width:13.5px;height:13.5px;background:#8c8444;"></div>
<div style="left:1087.7px;top:416.3px;width:13.5px;height:13.5px;background:#8a2c12;"></div>
<div style="left:1004.5px;top:430.8px;width:97px;height:1px;background:#3c3c3c;"></div>
<svg style="left:1005px;top:434px;" width="12" height="11" viewBox="0 0 12 11"><path d="M0 2.500V1h4.500l1 1.500z" fill="#d8d8d8"/><rect x="0" y="2.500" width="12" height="8.500" fill="#c9c9c9"/><rect x="0" y="2.500" width="12" height="1.200" fill="#ececec"/></svg>
<div style="left:1017.7px;top:432.3px;width:13.5px;height:13.5px;background:#dfbe6c;"></div>
<div style="left:1031.7px;top:432.3px;width:13.5px;height:13.5px;background:#fcca83;"></div>
<div style="left:1045.7px;top:432.3px;width:13.5px;height:13.5px;background:#6c4a0e;"></div>
<div style="left:1059.7px;top:432.3px;width:13.5px;height:13.5px;background:#94681c;"></div>
<div style="left:1073.7px;top:432.3px;width:13.5px;height:13.5px;background:#c8623c;"></div>
<div style="left:1087.7px;top:432.3px;width:13.5px;height:13.5px;background:#b8281a;"></div>
<div style="left:1004.5px;top:446.8px;width:97px;height:1px;background:#3c3c3c;"></div>
<div style="left:1031.4px;top:432px;width:14px;height:14px;background:#fcca83;border:1px solid #fff;box-shadow:inset 0 0 0 1px #000;"></div>
<svg style="left:1006px;top:562px;" width="14" height="12" viewBox="0 0 14 12"><path d="M1 1v9M3.500 1v9" stroke="#d8d8d8" stroke-width="1.600"/><path d="M6 1.500l3.500 8.500" stroke="#d8d8d8" stroke-width="1.800"/><path d="M9 9.500h5l-2.500 2.500z" fill="#d8d8d8"/></svg>
<svg style="left:1039px;top:564px;" width="6" height="9" viewBox="0 0 6 9"><path d="M6 0V9 L0 4.5 Z" fill="#dcdcdc"/></svg>
<svg style="left:1065px;top:564px;" width="6" height="9" viewBox="0 0 6 9"><path d="M0 0V9 L6 4.5 Z" fill="#dcdcdc"/></svg>
<svg style="left:1228px;top:562px;" width="13" height="12" viewBox="0 0 13 12"><path d="M1 1l11 10M12 1L1 11" stroke="#dcdcdc" stroke-width="1.400"/><circle cx="10.500" cy="2.500" r="1.800" fill="#dcdcdc"/></svg>
<svg style="left:1265px;top:568px;" width="10" height="10" viewBox="0 0 10 10"><rect x="0" y="8" width="1" height="1" fill="#222"/><rect x="2" y="6" width="1" height="1" fill="#222"/><rect x="2" y="8" width="1" height="1" fill="#222"/><rect x="4" y="4" width="1" height="1" fill="#222"/><rect x="4" y="6" width="1" height="1" fill="#222"/><rect x="4" y="8" width="1" height="1" fill="#222"/><rect x="6" y="2" width="1" height="1" fill="#222"/><rect x="6" y="4" width="1" height="1" fill="#222"/><rect x="6" y="6" width="1" height="1" fill="#222"/><rect x="6" y="8" width="1" height="1" fill="#222"/><rect x="8" y="0" width="1" height="1" fill="#222"/><rect x="8" y="2" width="1" height="1" fill="#222"/><rect x="8" y="4" width="1" height="1" fill="#222"/><rect x="8" y="6" width="1" height="1" fill="#222"/><rect x="8" y="8" width="1" height="1" fill="#222"/></svg>
<div style="left:998px;top:577.5px;width:277.5px;height:1px;background:#2b2b2b;"></div>
<div style="left:998px;top:578.5px;width:277.5px;height:7px;background:#454545;"></div>
<svg style="left:1127px;top:580px;" width="20" height="4" viewBox="0 0 20 4"><rect x="0" y="0" width="1" height="4" fill="#161616"/><rect x="2" y="0" width="1" height="4" fill="#161616"/><rect x="4" y="0" width="1" height="4" fill="#161616"/><rect x="6" y="0" width="1" height="4" fill="#161616"/><rect x="8" y="0" width="1" height="4" fill="#161616"/><rect x="10" y="0" width="1" height="4" fill="#161616"/><rect x="12" y="0" width="1" height="4" fill="#161616"/><rect x="14" y="0" width="1" height="4" fill="#161616"/><rect x="16" y="0" width="1" height="4" fill="#161616"/><rect x="18" y="0" width="1" height="4" fill="#161616"/></svg>
</div></body></html>
